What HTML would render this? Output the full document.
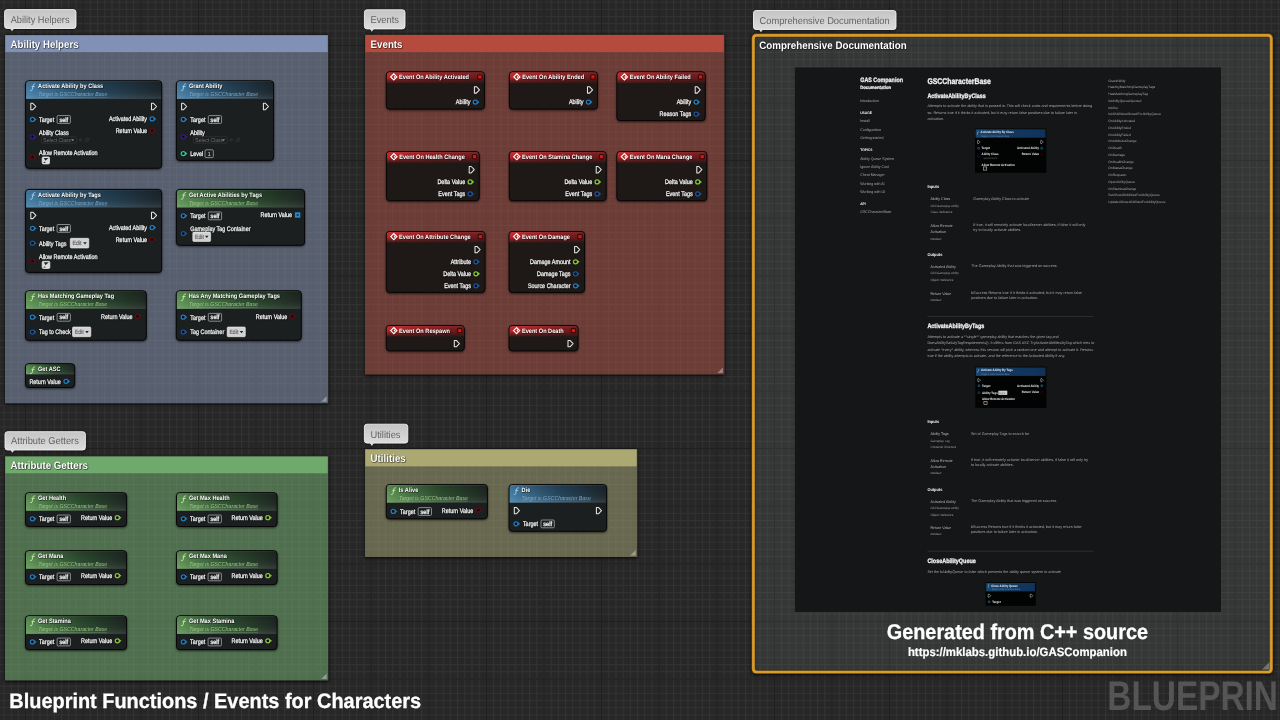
<!DOCTYPE html><html><head><meta charset="utf-8"><title>Blueprint Functions / Events for Characters</title>
<style>html,body{margin:0;padding:0;background:#272727;overflow:hidden}svg{display:block;will-change:transform;filter:blur(0.4px);text-rendering:geometricPrecision;font-family:"Liberation Sans",sans-serif}</style></head><body>
<svg width="1280" height="720" viewBox="0 0 1280 720">
<defs>
<pattern id="gf" x="25.10" y="44.90" width="7.2000" height="7.2000" patternUnits="userSpaceOnUse"><path d="M0.5 0V7.200M0 0.5H7.200" stroke="#333333" stroke-width="1"/></pattern>
<pattern id="gm" x="25.10" y="44.90" width="57.600" height="57.600" patternUnits="userSpaceOnUse"><path d="M0.5 0V57.600M0 0.5H57.600" stroke="#1e1e1e" stroke-width="1.1"/></pattern>
<filter color-interpolation-filters="sRGB" id="ts" x="-5%" y="-30%" width="110%" height="170%"><feDropShadow dx="0.5" dy="0.5" stdDeviation="0.25" flood-color="#000" flood-opacity="0.9"/></filter>
<filter color-interpolation-filters="sRGB" id="ns" x="-10%" y="-10%" width="120%" height="130%"><feDropShadow dx="0" dy="1" stdDeviation="1.2" flood-color="#000" flood-opacity="0.6"/></filter>
<filter color-interpolation-filters="sRGB" id="cs" x="-5%" y="-5%" width="110%" height="110%"><feDropShadow dx="0" dy="1" stdDeviation="1.5" flood-color="#000" flood-opacity="0.55"/></filter>
<filter color-interpolation-filters="sRGB" id="bs" x="-10%" y="-20%" width="120%" height="150%"><feDropShadow dx="0" dy="0.5" stdDeviation="0.8" flood-color="#000" flood-opacity="0.7"/></filter>
<filter color-interpolation-filters="sRGB" id="sb" x="-5%" y="-5%" width="110%" height="110%"><feGaussianBlur stdDeviation="1.6"/></filter>
<filter color-interpolation-filters="sRGB" id="blur"><feGaussianBlur stdDeviation="0.35"/></filter>
<linearGradient id="hblue" x1="0" x2="1" y1="0" y2="0"><stop offset="0" stop-color="#4d8ab6" stop-opacity="0.95"/><stop offset="0.55" stop-color="#2c5c7e" stop-opacity="0.62"/><stop offset="1" stop-color="#2c5c7e" stop-opacity="0.14"/></linearGradient>
<linearGradient id="hgreen" x1="0" x2="1" y1="0" y2="0"><stop offset="0" stop-color="#6aa35f" stop-opacity="0.95"/><stop offset="0.55" stop-color="#38693a" stop-opacity="0.62"/><stop offset="1" stop-color="#38693a" stop-opacity="0.14"/></linearGradient>
<linearGradient id="hred" x1="0" x2="1" y1="0" y2="0"><stop offset="0" stop-color="#c8262a" stop-opacity="0.95"/><stop offset="0.55" stop-color="#a01a1e" stop-opacity="0.85"/><stop offset="1" stop-color="#a01a1e" stop-opacity="0.6"/></linearGradient>
<linearGradient id="hv" x1="0" x2="0" y1="0" y2="1"><stop offset="0" stop-color="#fff" stop-opacity="0.16"/><stop offset="0.08" stop-color="#000" stop-opacity="0.16"/><stop offset="0.5" stop-color="#000" stop-opacity="0.04"/><stop offset="1" stop-color="#fff" stop-opacity="0.10"/></linearGradient>
<linearGradient id="hvr" x1="0" x2="0" y1="0" y2="1"><stop offset="0" stop-color="#fff" stop-opacity="0.10"/><stop offset="0.5" stop-color="#1e1917" stop-opacity="0"/><stop offset="1" stop-color="#1e1917" stop-opacity="0.8"/></linearGradient>
<linearGradient id="bub" x1="0" x2="0" y1="0" y2="1"><stop offset="0" stop-color="#c4c4c4"/><stop offset="1" stop-color="#dcdcdc"/></linearGradient>
</defs>
<rect width="1280" height="720" fill="#272727"/>
<rect width="1280" height="720" fill="url(#gf)"/>
<rect width="1280" height="720" fill="url(#gm)"/>
<clipPath id="s1"><path clip-rule="evenodd" d="M0 0H1280V720H0Z M5.00 35.00V403.30H328.20V35.00Z"/></clipPath>
<g clip-path="url(#s1)"><rect x="4.50" y="35.00" width="324.20" height="369.80" rx="0" fill="#000" opacity="0.75" filter="url(#sb)"/></g>
<rect x="5.00" y="35.00" width="323.20" height="368.30" fill="#8a98b6" opacity="0.5"/>
<rect x="5.30" y="35.30" width="322.40" height="16.70" fill="#8091b5"/>
<text x="10.60" y="48.10" font-size="10.8" fill="#fff" font-weight="700" textLength="68.00" lengthAdjust="spacingAndGlyphs" filter="url(#ts)">Ability Helpers</text>
<path d="M326.70 396.30V401.80H321.20Z" fill="#fff" opacity="0.35"/>
<g filter="url(#bs)"><rect x="4.60" y="9.60" width="71.40" height="18.90" rx="2.6" fill="url(#bub)" stroke="#f2f2f2" stroke-width="0.9"/>
<path d="M9.80 28.20L12.00 31.30L14.40 28.20Z" fill="#dcdcdc"/></g>
<text x="10.70" y="22.90" font-size="9.9" fill="#646464" textLength="58.80" lengthAdjust="spacingAndGlyphs">Ability Helpers</text>
<clipPath id="s2"><path clip-rule="evenodd" d="M0 0H1280V720H0Z M365.00 34.70V374.50H724.40V34.70Z"/></clipPath>
<g clip-path="url(#s2)"><rect x="364.50" y="34.70" width="360.40" height="341.30" rx="0" fill="#000" opacity="0.75" filter="url(#sb)"/></g>
<rect x="365.00" y="34.70" width="359.40" height="339.80" fill="#b25146" opacity="0.5"/>
<rect x="365.30" y="35.00" width="358.60" height="17.00" fill="#b64a3d"/>
<text x="370.60" y="47.80" font-size="10.8" fill="#fff" font-weight="700" textLength="31.88" lengthAdjust="spacingAndGlyphs" filter="url(#ts)">Events</text>
<path d="M722.90 367.50V373.00H717.40Z" fill="#fff" opacity="0.35"/>
<g filter="url(#bs)"><rect x="364.40" y="9.80" width="40.60" height="19.10" rx="2.6" fill="url(#bub)" stroke="#f2f2f2" stroke-width="0.9"/>
<path d="M369.60 28.60L371.80 31.70L374.20 28.60Z" fill="#dcdcdc"/></g>
<text x="370.50" y="23.30" font-size="9.9" fill="#646464" textLength="28.43" lengthAdjust="spacingAndGlyphs">Events</text>
<clipPath id="s3"><path clip-rule="evenodd" d="M0 0H1280V720H0Z M365.00 449.10V556.90H637.20V449.10Z"/></clipPath>
<g clip-path="url(#s3)"><rect x="364.50" y="449.10" width="273.20" height="109.30" rx="0" fill="#000" opacity="0.75" filter="url(#sb)"/></g>
<rect x="365.00" y="449.10" width="272.20" height="107.80" fill="#aaa878" opacity="0.5"/>
<rect x="365.30" y="449.40" width="271.40" height="17.00" fill="#aba872"/>
<text x="370.60" y="462.20" font-size="10.8" fill="#fff" font-weight="700" textLength="35.11" lengthAdjust="spacingAndGlyphs" filter="url(#ts)">Utilities</text>
<path d="M635.70 549.90V555.40H630.20Z" fill="#fff" opacity="0.35"/>
<g filter="url(#bs)"><rect x="364.40" y="424.20" width="43.40" height="18.90" rx="2.6" fill="url(#bub)" stroke="#f2f2f2" stroke-width="0.9"/>
<path d="M369.60 442.80L371.80 445.90L374.20 442.80Z" fill="#dcdcdc"/></g>
<text x="370.50" y="437.50" font-size="9.9" fill="#646464" textLength="29.97" lengthAdjust="spacingAndGlyphs">Utilities</text>
<clipPath id="s4"><path clip-rule="evenodd" d="M0 0H1280V720H0Z M5.00 456.30V680.40H328.20V456.30Z"/></clipPath>
<g clip-path="url(#s4)"><rect x="4.50" y="456.30" width="324.20" height="225.60" rx="0" fill="#000" opacity="0.75" filter="url(#sb)"/></g>
<rect x="5.00" y="456.30" width="323.20" height="224.10" fill="#7ab878" opacity="0.5"/>
<rect x="5.30" y="456.60" width="322.40" height="16.70" fill="#70a96c"/>
<text x="10.60" y="469.40" font-size="10.8" fill="#fff" font-weight="700" textLength="77.23" lengthAdjust="spacingAndGlyphs" filter="url(#ts)">Attribute Getters</text>
<path d="M326.70 673.40V678.90H321.20Z" fill="#fff" opacity="0.35"/>
<g filter="url(#bs)"><rect x="5.00" y="431.70" width="80.40" height="18.30" rx="2.6" fill="url(#bub)" stroke="#f2f2f2" stroke-width="0.9"/>
<path d="M10.20 449.70L12.40 452.80L14.80 449.70Z" fill="#dcdcdc"/></g>
<text x="11.10" y="444.40" font-size="9.9" fill="#646464" textLength="67.71" lengthAdjust="spacingAndGlyphs">Attribute Getters</text>
<g filter="url(#ns)"><rect x="25.60" y="80.80" width="136.10" height="87.50" rx="3.2" fill="#1b1f20" stroke="#060707" stroke-width="1"/></g>
<clipPath id="c1"><rect x="26.10" y="81.30" width="135.10" height="86.50" rx="2.8"/></clipPath>
<g clip-path="url(#c1)">
<rect x="25.60" y="80.80" width="136.10" height="18.10" fill="url(#hblue)"/>
<rect x="25.60" y="80.80" width="136.10" height="18.10" fill="url(#hv)"/>
</g>
<path d="M30.60 90.70c1.0 0.4 1.5 -0.3 1.75 -1.5l0.7 -3.6c0.25 -1.3 0.8 -1.9 1.9 -1.6M32.00 86.50h2.3" fill="none" stroke="#9fd0f5" stroke-width="0.95" stroke-linecap="round"/>
<text x="38.10" y="88.40" font-size="6.3" fill="#ffffff" font-weight="700" textLength="65.07" lengthAdjust="spacingAndGlyphs" filter="url(#ts)">Activate Ability by Class</text>
<text x="38.30" y="96.20" font-size="5.8" fill="#7fb0d2" font-style="italic" textLength="68.99" lengthAdjust="spacingAndGlyphs" opacity="0.9">Target is GSCCharacter Base</text>
<path d="M38.30 97.30h68.99" stroke="#7fb0d2" stroke-width="0.45" opacity="0.6"/>
<path d="M30.80 103.30 H32.80 L35.90 106.50 L32.80 109.70 H30.80Z" fill="none" stroke="#e4e4e4" stroke-width="1.05" stroke-linejoin="round"/>
<path d="M151.50 103.30 H153.50 L156.60 106.50 L153.50 109.70 H151.50Z" fill="none" stroke="#e4e4e4" stroke-width="1.05" stroke-linejoin="round"/>
<path d="M34.10 117.50 L36.70 119.40 L34.10 121.30Z" fill="#237cc0"/>
<circle cx="32.50" cy="119.40" r="2.0" fill="#0a0c0e" stroke="#237cc0" stroke-width="1.25"/>
<text x="39.00" y="121.75" font-size="6.6" fill="#f4f4f4" textLength="15.15" lengthAdjust="spacingAndGlyphs" filter="url(#ts)" stroke="#f4f4f4" stroke-width="0.28">Target</text>
<rect x="57.10" y="115.60" width="13.30" height="7.80" fill="none" rx="1" stroke="#b8b8b8" stroke-width="0.7"/>
<text x="63.75" y="121.60" font-size="6.2" fill="#ececec" text-anchor="middle" textLength="8.71" lengthAdjust="spacingAndGlyphs" stroke="#ececec" stroke-width="0.32">self</text>
<text x="147.10" y="121.25" font-size="6.6" fill="#f4f4f4" text-anchor="end" textLength="38.17" lengthAdjust="spacingAndGlyphs" filter="url(#ts)" stroke="#f4f4f4" stroke-width="0.28">Activated Ability</text>
<path d="M153.70 117.00 L156.30 118.90 L153.70 120.80Z" fill="#237cc0"/>
<circle cx="152.10" cy="118.90" r="2.0" fill="#0a0c0e" stroke="#237cc0" stroke-width="1.25"/>
<text x="147.10" y="132.95" font-size="6.6" fill="#f4f4f4" text-anchor="end" textLength="31.41" lengthAdjust="spacingAndGlyphs" filter="url(#ts)" stroke="#f4f4f4" stroke-width="0.28">Return Value</text>
<path d="M153.70 128.70 L156.30 130.60 L153.70 132.50Z" fill="#5f0c10"/>
<circle cx="152.10" cy="130.60" r="2.0" fill="#0a0c0e" stroke="#5f0c10" stroke-width="1.25"/>
<text x="39.00" y="134.95" font-size="6.6" fill="#f4f4f4" textLength="29.68" lengthAdjust="spacingAndGlyphs" filter="url(#ts)" stroke="#f4f4f4" stroke-width="0.28">Ability Class</text>
<path d="M34.10 134.90 L36.70 136.80 L34.10 138.70Z" fill="#391b84"/>
<circle cx="32.50" cy="136.80" r="2.0" fill="#0a0c0e" stroke="#391b84" stroke-width="1.25"/>
<rect x="41.50" y="136.80" width="34.80" height="6.30" fill="#1a1c1d" rx="1" stroke="#3a3d3f" stroke-width="0.6"/>
<text x="43.30" y="141.85" font-size="5.6" fill="#6f7375" textLength="27.79" lengthAdjust="spacingAndGlyphs">Select Class</text>
<path d="M70.90 139.15h3.4l-1.7 2z" fill="#8a8d8f"/>
<path d="M79.30 139.95h3.4M79.30 139.95l1.5 -1.4M79.30 139.95l1.5 1.4" stroke="#3c4042" stroke-width="0.7" fill="none"/>
<circle cx="87.50" cy="139.55" r="1.5" fill="none" stroke="#3c4042" stroke-width="0.7"/><path d="M86.40 140.75l-1.2 1.4" stroke="#3c4042" stroke-width="0.7"/>
<text x="39.00" y="155.15" font-size="6.6" fill="#f4f4f4" textLength="58.46" lengthAdjust="spacingAndGlyphs" filter="url(#ts)" stroke="#f4f4f4" stroke-width="0.28">Allow Remote Activation</text>
<path d="M34.10 155.30 L36.70 157.20 L34.10 159.10Z" fill="#5f0c10"/>
<circle cx="32.50" cy="157.20" r="2.0" fill="#0a0c0e" stroke="#5f0c10" stroke-width="1.25"/>
<rect x="42.20" y="157.00" width="7.30" height="6.90" fill="#dcdcdc" rx="1.1" stroke="#e6e6e6" stroke-width="0.8"/>
<path d="M43.90 158.00L45.30 160.86L48.50 158.00Z" fill="#242628"/>
<path d="M43.10 163.00l1.52 -1.38l1.10 1.38Z" fill="#3a3c3e"/>
<g filter="url(#ns)"><rect x="176.40" y="80.80" width="97.20" height="79.60" rx="3.2" fill="#1b1f20" stroke="#060707" stroke-width="1"/></g>
<clipPath id="c2"><rect x="176.90" y="81.30" width="96.20" height="78.60" rx="2.8"/></clipPath>
<g clip-path="url(#c2)">
<rect x="176.40" y="80.80" width="97.20" height="18.10" fill="url(#hblue)"/>
<rect x="176.40" y="80.80" width="97.20" height="18.10" fill="url(#hv)"/>
</g>
<path d="M181.40 90.70c1.0 0.4 1.5 -0.3 1.75 -1.5l0.7 -3.6c0.25 -1.3 0.8 -1.9 1.9 -1.6M182.80 86.50h2.3" fill="none" stroke="#9fd0f5" stroke-width="0.95" stroke-linecap="round"/>
<text x="188.90" y="88.40" font-size="6.3" fill="#ffffff" font-weight="700" textLength="33.51" lengthAdjust="spacingAndGlyphs" filter="url(#ts)">Grant Ability</text>
<text x="189.10" y="96.20" font-size="5.8" fill="#7fb0d2" font-style="italic" textLength="68.99" lengthAdjust="spacingAndGlyphs" opacity="0.9">Target is GSCCharacter Base</text>
<path d="M189.10 97.30h68.99" stroke="#7fb0d2" stroke-width="0.45" opacity="0.6"/>
<path d="M181.60 103.30 H183.60 L186.70 106.50 L183.60 109.70 H181.60Z" fill="none" stroke="#e4e4e4" stroke-width="1.05" stroke-linejoin="round"/>
<path d="M263.40 103.30 H265.40 L268.50 106.50 L265.40 109.70 H263.40Z" fill="none" stroke="#e4e4e4" stroke-width="1.05" stroke-linejoin="round"/>
<path d="M184.90 117.50 L187.50 119.40 L184.90 121.30Z" fill="#237cc0"/>
<circle cx="183.30" cy="119.40" r="2.0" fill="#0a0c0e" stroke="#237cc0" stroke-width="1.25"/>
<text x="190.30" y="121.75" font-size="6.6" fill="#f4f4f4" textLength="15.15" lengthAdjust="spacingAndGlyphs" filter="url(#ts)" stroke="#f4f4f4" stroke-width="0.28">Target</text>
<rect x="208.30" y="115.60" width="13.30" height="7.80" fill="none" rx="1" stroke="#b8b8b8" stroke-width="0.7"/>
<text x="214.95" y="121.60" font-size="6.2" fill="#ececec" text-anchor="middle" textLength="8.71" lengthAdjust="spacingAndGlyphs" stroke="#ececec" stroke-width="0.32">self</text>
<text x="190.30" y="134.95" font-size="6.6" fill="#f4f4f4" textLength="14.54" lengthAdjust="spacingAndGlyphs" filter="url(#ts)" stroke="#f4f4f4" stroke-width="0.28">Ability</text>
<path d="M184.90 134.90 L187.50 136.80 L184.90 138.70Z" fill="#391b84"/>
<circle cx="183.30" cy="136.80" r="2.0" fill="#0a0c0e" stroke="#391b84" stroke-width="1.25"/>
<rect x="193.50" y="136.80" width="33.70" height="6.30" fill="#1a1c1d" rx="1" stroke="#3a3d3f" stroke-width="0.6"/>
<text x="195.30" y="141.85" font-size="5.6" fill="#6f7375" textLength="27.79" lengthAdjust="spacingAndGlyphs">Select Class</text>
<path d="M221.80 139.15h3.4l-1.7 2z" fill="#8a8d8f"/>
<path d="M230.20 139.95h3.4M230.20 139.95l1.5 -1.4M230.20 139.95l1.5 1.4" stroke="#3c4042" stroke-width="0.7" fill="none"/>
<circle cx="238.40" cy="139.55" r="1.5" fill="none" stroke="#3c4042" stroke-width="0.7"/><path d="M237.30 140.75l-1.2 1.4" stroke="#3c4042" stroke-width="0.7"/>
<path d="M184.90 151.70 L187.50 153.60 L184.90 155.50Z" fill="#2cc896"/>
<circle cx="183.30" cy="153.60" r="2.0" fill="#0a0c0e" stroke="#2cc896" stroke-width="1.25"/>
<text x="190.30" y="155.95" font-size="6.6" fill="#f4f4f4" textLength="13.03" lengthAdjust="spacingAndGlyphs" filter="url(#ts)" stroke="#f4f4f4" stroke-width="0.28">Level</text>
<rect x="205.00" y="149.80" width="8.30" height="7.80" fill="none" rx="1" stroke="#b8b8b8" stroke-width="0.7"/>
<text x="209.15" y="155.70" font-size="5.8" fill="#e0e0e0" text-anchor="middle" textLength="2.89" lengthAdjust="spacingAndGlyphs">1</text>
<g filter="url(#ns)"><rect x="25.60" y="189.40" width="136.10" height="83.00" rx="3.2" fill="#1b1f20" stroke="#060707" stroke-width="1"/></g>
<clipPath id="c3"><rect x="26.10" y="189.90" width="135.10" height="82.00" rx="2.8"/></clipPath>
<g clip-path="url(#c3)">
<rect x="25.60" y="189.40" width="136.10" height="18.10" fill="url(#hblue)"/>
<rect x="25.60" y="189.40" width="136.10" height="18.10" fill="url(#hv)"/>
</g>
<path d="M30.60 199.30c1.0 0.4 1.5 -0.3 1.75 -1.5l0.7 -3.6c0.25 -1.3 0.8 -1.9 1.9 -1.6M32.00 195.10h2.3" fill="none" stroke="#9fd0f5" stroke-width="0.95" stroke-linecap="round"/>
<text x="38.10" y="197.00" font-size="6.3" fill="#ffffff" font-weight="700" textLength="62.77" lengthAdjust="spacingAndGlyphs" filter="url(#ts)">Activate Ability by Tags</text>
<text x="38.30" y="204.80" font-size="5.8" fill="#7fb0d2" font-style="italic" textLength="68.99" lengthAdjust="spacingAndGlyphs" opacity="0.9">Target is GSCCharacter Base</text>
<path d="M38.30 205.90h68.99" stroke="#7fb0d2" stroke-width="0.45" opacity="0.6"/>
<path d="M30.80 212.20 H32.80 L35.90 215.40 L32.80 218.60 H30.80Z" fill="none" stroke="#e4e4e4" stroke-width="1.05" stroke-linejoin="round"/>
<path d="M151.50 212.20 H153.50 L156.60 215.40 L153.50 218.60 H151.50Z" fill="none" stroke="#e4e4e4" stroke-width="1.05" stroke-linejoin="round"/>
<path d="M34.10 226.40 L36.70 228.30 L34.10 230.20Z" fill="#237cc0"/>
<circle cx="32.50" cy="228.30" r="2.0" fill="#0a0c0e" stroke="#237cc0" stroke-width="1.25"/>
<text x="39.00" y="230.65" font-size="6.6" fill="#f4f4f4" textLength="15.15" lengthAdjust="spacingAndGlyphs" filter="url(#ts)" stroke="#f4f4f4" stroke-width="0.28">Target</text>
<rect x="57.10" y="224.50" width="13.30" height="7.80" fill="none" rx="1" stroke="#b8b8b8" stroke-width="0.7"/>
<text x="63.75" y="230.50" font-size="6.2" fill="#ececec" text-anchor="middle" textLength="8.71" lengthAdjust="spacingAndGlyphs" stroke="#ececec" stroke-width="0.32">self</text>
<text x="147.10" y="229.95" font-size="6.6" fill="#f4f4f4" text-anchor="end" textLength="38.17" lengthAdjust="spacingAndGlyphs" filter="url(#ts)" stroke="#f4f4f4" stroke-width="0.28">Activated Ability</text>
<path d="M153.70 225.70 L156.30 227.60 L153.70 229.50Z" fill="#237cc0"/>
<circle cx="152.10" cy="227.60" r="2.0" fill="#0a0c0e" stroke="#237cc0" stroke-width="1.25"/>
<text x="147.10" y="242.05" font-size="6.6" fill="#f4f4f4" text-anchor="end" textLength="31.41" lengthAdjust="spacingAndGlyphs" filter="url(#ts)" stroke="#f4f4f4" stroke-width="0.28">Return Value</text>
<path d="M153.70 237.80 L156.30 239.70 L153.70 241.60Z" fill="#5f0c10"/>
<circle cx="152.10" cy="239.70" r="2.0" fill="#0a0c0e" stroke="#5f0c10" stroke-width="1.25"/>
<path d="M34.10 241.30 L36.70 243.20 L34.10 245.10Z" fill="#1b529c"/>
<circle cx="32.50" cy="243.20" r="2.0" fill="#0a0c0e" stroke="#1b529c" stroke-width="1.25"/>
<text x="39.00" y="245.55" font-size="6.6" fill="#f4f4f4" textLength="27.47" lengthAdjust="spacingAndGlyphs" filter="url(#ts)" stroke="#f4f4f4" stroke-width="0.28">Ability Tags</text>
<rect x="70.30" y="238.30" width="18.50" height="9.70" fill="#d2d2d2" rx="1" stroke="#f4f4f4" stroke-width="0.6"/>
<text x="72.50" y="245.25" font-size="6.2" fill="#6a6a6a" textLength="8.96" lengthAdjust="spacingAndGlyphs" stroke="#6a6a6a" stroke-width="0.2">Edit</text>
<path d="M83.20 242.25h3.6l-1.8 2.2z" fill="#222"/>
<text x="39.00" y="259.15" font-size="6.6" fill="#f4f4f4" textLength="58.46" lengthAdjust="spacingAndGlyphs" filter="url(#ts)" stroke="#f4f4f4" stroke-width="0.28">Allow Remote Activation</text>
<path d="M34.10 259.40 L36.70 261.30 L34.10 263.20Z" fill="#5f0c10"/>
<circle cx="32.50" cy="261.30" r="2.0" fill="#0a0c0e" stroke="#5f0c10" stroke-width="1.25"/>
<rect x="42.20" y="261.30" width="7.60" height="7.20" fill="#dcdcdc" rx="1.1" stroke="#e6e6e6" stroke-width="0.8"/>
<path d="M43.90 262.30L45.44 265.33L48.80 262.30Z" fill="#242628"/>
<path d="M43.10 267.60l1.58 -1.44l1.15 1.44Z" fill="#3a3c3e"/>
<g filter="url(#ns)"><rect x="176.40" y="189.40" width="128.20" height="55.90" rx="3.2" fill="#1b1f20" stroke="#060707" stroke-width="1"/></g>
<clipPath id="c4"><rect x="176.90" y="189.90" width="127.20" height="54.90" rx="2.8"/></clipPath>
<g clip-path="url(#c4)">
<rect x="176.40" y="189.40" width="128.20" height="18.10" fill="url(#hgreen)"/>
<rect x="176.40" y="189.40" width="128.20" height="18.10" fill="url(#hv)"/>
</g>
<path d="M181.40 199.30c1.0 0.4 1.5 -0.3 1.75 -1.5l0.7 -3.6c0.25 -1.3 0.8 -1.9 1.9 -1.6M182.80 195.10h2.3" fill="none" stroke="#bfe8a8" stroke-width="0.95" stroke-linecap="round"/>
<text x="188.90" y="197.00" font-size="6.3" fill="#ffffff" font-weight="700" textLength="73.18" lengthAdjust="spacingAndGlyphs" filter="url(#ts)">Get Active Abilities by Tags</text>
<text x="189.10" y="204.80" font-size="5.8" fill="#9fce8c" font-style="italic" textLength="68.99" lengthAdjust="spacingAndGlyphs" opacity="0.9">Target is GSCCharacter Base</text>
<path d="M189.10 205.90h68.99" stroke="#9fce8c" stroke-width="0.45" opacity="0.6"/>
<path d="M184.90 213.90 L187.50 215.80 L184.90 217.70Z" fill="#237cc0"/>
<circle cx="183.30" cy="215.80" r="2.0" fill="#0a0c0e" stroke="#237cc0" stroke-width="1.25"/>
<text x="190.30" y="218.15" font-size="6.6" fill="#f4f4f4" textLength="15.15" lengthAdjust="spacingAndGlyphs" filter="url(#ts)" stroke="#f4f4f4" stroke-width="0.28">Target</text>
<rect x="208.30" y="212.00" width="13.30" height="7.80" fill="none" rx="1" stroke="#b8b8b8" stroke-width="0.7"/>
<text x="214.95" y="218.00" font-size="6.2" fill="#ececec" text-anchor="middle" textLength="8.71" lengthAdjust="spacingAndGlyphs" stroke="#ececec" stroke-width="0.32">self</text>
<text x="292.00" y="217.35" font-size="6.6" fill="#f4f4f4" text-anchor="end" textLength="31.41" lengthAdjust="spacingAndGlyphs" filter="url(#ts)" stroke="#f4f4f4" stroke-width="0.28">Return Value</text>
<rect x="294.90" y="212.30" width="5.40" height="5.40" fill="#2a8fd6" opacity="0.95"/>
<rect x="296.60" y="214.00" width="2.00" height="2.00" fill="#0e3a5e" opacity="0.9"/>
<text x="190.30" y="230.65" font-size="6.6" fill="#f4f4f4" textLength="60.19" lengthAdjust="spacingAndGlyphs" filter="url(#ts)" stroke="#f4f4f4" stroke-width="0.28">Gameplay Tag Container</text>
<path d="M184.90 231.60 L187.50 233.50 L184.90 235.40Z" fill="#1b529c"/>
<circle cx="183.30" cy="233.50" r="2.0" fill="#0a0c0e" stroke="#1b529c" stroke-width="1.25"/>
<rect x="192.80" y="232.10" width="17.80" height="9.30" fill="#d2d2d2" rx="1" stroke="#f4f4f4" stroke-width="0.6"/>
<text x="195.00" y="238.85" font-size="6.2" fill="#6a6a6a" textLength="8.96" lengthAdjust="spacingAndGlyphs" stroke="#6a6a6a" stroke-width="0.2">Edit</text>
<path d="M205.00 235.85h3.6l-1.8 2.2z" fill="#222"/>
<g filter="url(#ns)"><rect x="25.50" y="290.80" width="120.80" height="49.50" rx="3.2" fill="#1b1f20" stroke="#060707" stroke-width="1"/></g>
<clipPath id="c5"><rect x="26.00" y="291.30" width="119.80" height="48.50" rx="2.8"/></clipPath>
<g clip-path="url(#c5)">
<rect x="25.50" y="290.80" width="120.80" height="18.10" fill="url(#hgreen)"/>
<rect x="25.50" y="290.80" width="120.80" height="18.10" fill="url(#hv)"/>
</g>
<path d="M30.50 300.70c1.0 0.4 1.5 -0.3 1.75 -1.5l0.7 -3.6c0.25 -1.3 0.8 -1.9 1.9 -1.6M31.90 296.50h2.3" fill="none" stroke="#bfe8a8" stroke-width="0.95" stroke-linecap="round"/>
<text x="38.00" y="298.40" font-size="6.3" fill="#ffffff" font-weight="700" textLength="76.10" lengthAdjust="spacingAndGlyphs" filter="url(#ts)">Has Matching Gameplay Tag</text>
<text x="38.20" y="306.20" font-size="5.8" fill="#9fce8c" font-style="italic" textLength="68.99" lengthAdjust="spacingAndGlyphs" opacity="0.9">Target is GSCCharacter Base</text>
<path d="M38.20 307.30h68.99" stroke="#9fce8c" stroke-width="0.45" opacity="0.6"/>
<path d="M34.00 315.30 L36.60 317.20 L34.00 319.10Z" fill="#237cc0"/>
<circle cx="32.40" cy="317.20" r="2.0" fill="#0a0c0e" stroke="#237cc0" stroke-width="1.25"/>
<text x="39.00" y="319.55" font-size="6.6" fill="#f4f4f4" textLength="15.15" lengthAdjust="spacingAndGlyphs" filter="url(#ts)" stroke="#f4f4f4" stroke-width="0.28">Target</text>
<rect x="57.10" y="313.40" width="13.30" height="7.80" fill="none" rx="1" stroke="#b8b8b8" stroke-width="0.7"/>
<text x="63.75" y="319.40" font-size="6.2" fill="#ececec" text-anchor="middle" textLength="8.71" lengthAdjust="spacingAndGlyphs" stroke="#ececec" stroke-width="0.32">self</text>
<text x="132.50" y="318.65" font-size="6.6" fill="#f4f4f4" text-anchor="end" textLength="31.41" lengthAdjust="spacingAndGlyphs" filter="url(#ts)" stroke="#f4f4f4" stroke-width="0.28">Return Value</text>
<path d="M139.10 314.40 L141.70 316.30 L139.10 318.20Z" fill="#5f0c10"/>
<circle cx="137.50" cy="316.30" r="2.0" fill="#0a0c0e" stroke="#5f0c10" stroke-width="1.25"/>
<path d="M34.00 330.10 L36.60 332.00 L34.00 333.90Z" fill="#1b529c"/>
<circle cx="32.40" cy="332.00" r="2.0" fill="#0a0c0e" stroke="#1b529c" stroke-width="1.25"/>
<text x="39.00" y="334.35" font-size="6.6" fill="#f4f4f4" textLength="31.81" lengthAdjust="spacingAndGlyphs" filter="url(#ts)" stroke="#f4f4f4" stroke-width="0.28">Tag to Check</text>
<rect x="72.50" y="327.00" width="18.30" height="9.70" fill="#d2d2d2" rx="1" stroke="#f4f4f4" stroke-width="0.6"/>
<text x="74.70" y="333.95" font-size="6.2" fill="#6a6a6a" textLength="8.96" lengthAdjust="spacingAndGlyphs" stroke="#6a6a6a" stroke-width="0.2">Edit</text>
<path d="M85.20 330.95h3.6l-1.8 2.2z" fill="#222"/>
<g filter="url(#ns)"><rect x="176.30" y="290.80" width="125.00" height="49.50" rx="3.2" fill="#1b1f20" stroke="#060707" stroke-width="1"/></g>
<clipPath id="c6"><rect x="176.80" y="291.30" width="124.00" height="48.50" rx="2.8"/></clipPath>
<g clip-path="url(#c6)">
<rect x="176.30" y="290.80" width="125.00" height="18.10" fill="url(#hgreen)"/>
<rect x="176.30" y="290.80" width="125.00" height="18.10" fill="url(#hv)"/>
</g>
<path d="M181.30 300.70c1.0 0.4 1.5 -0.3 1.75 -1.5l0.7 -3.6c0.25 -1.3 0.8 -1.9 1.9 -1.6M182.70 296.50h2.3" fill="none" stroke="#bfe8a8" stroke-width="0.95" stroke-linecap="round"/>
<text x="188.80" y="298.40" font-size="6.3" fill="#ffffff" font-weight="700" textLength="91.20" lengthAdjust="spacingAndGlyphs" filter="url(#ts)">Has Any Matching Gameplay Tags</text>
<text x="189.00" y="306.20" font-size="5.8" fill="#9fce8c" font-style="italic" textLength="68.99" lengthAdjust="spacingAndGlyphs" opacity="0.9">Target is GSCCharacter Base</text>
<path d="M189.00 307.30h68.99" stroke="#9fce8c" stroke-width="0.45" opacity="0.6"/>
<path d="M184.80 315.30 L187.40 317.20 L184.80 319.10Z" fill="#237cc0"/>
<circle cx="183.20" cy="317.20" r="2.0" fill="#0a0c0e" stroke="#237cc0" stroke-width="1.25"/>
<text x="190.30" y="319.55" font-size="6.6" fill="#f4f4f4" textLength="15.15" lengthAdjust="spacingAndGlyphs" filter="url(#ts)" stroke="#f4f4f4" stroke-width="0.28">Target</text>
<rect x="208.30" y="313.40" width="13.30" height="7.80" fill="none" rx="1" stroke="#b8b8b8" stroke-width="0.7"/>
<text x="214.95" y="319.40" font-size="6.2" fill="#ececec" text-anchor="middle" textLength="8.71" lengthAdjust="spacingAndGlyphs" stroke="#ececec" stroke-width="0.32">self</text>
<text x="287.20" y="318.65" font-size="6.6" fill="#f4f4f4" text-anchor="end" textLength="31.41" lengthAdjust="spacingAndGlyphs" filter="url(#ts)" stroke="#f4f4f4" stroke-width="0.28">Return Value</text>
<path d="M293.80 314.40 L296.40 316.30 L293.80 318.20Z" fill="#5f0c10"/>
<circle cx="292.20" cy="316.30" r="2.0" fill="#0a0c0e" stroke="#5f0c10" stroke-width="1.25"/>
<path d="M184.80 330.10 L187.40 332.00 L184.80 333.90Z" fill="#1b529c"/>
<circle cx="183.20" cy="332.00" r="2.0" fill="#0a0c0e" stroke="#1b529c" stroke-width="1.25"/>
<text x="190.30" y="334.35" font-size="6.6" fill="#f4f4f4" textLength="33.93" lengthAdjust="spacingAndGlyphs" filter="url(#ts)" stroke="#f4f4f4" stroke-width="0.28">Tag Container</text>
<rect x="227.20" y="327.00" width="18.10" height="9.70" fill="#d2d2d2" rx="1" stroke="#f4f4f4" stroke-width="0.6"/>
<text x="229.40" y="333.95" font-size="6.2" fill="#6a6a6a" textLength="8.96" lengthAdjust="spacingAndGlyphs" stroke="#6a6a6a" stroke-width="0.2">Edit</text>
<path d="M239.70 330.95h3.6l-1.8 2.2z" fill="#222"/>
<g filter="url(#ns)"><rect x="25.50" y="363.70" width="49.20" height="23.80" rx="3.2" fill="#1b1f20" stroke="#060707" stroke-width="1"/></g>
<clipPath id="c7"><rect x="26.00" y="364.20" width="48.20" height="22.80" rx="2.8"/></clipPath>
<g clip-path="url(#c7)">
<rect x="25.50" y="363.70" width="49.20" height="10.60" fill="url(#hgreen)"/>
<rect x="25.50" y="363.70" width="49.20" height="10.60" fill="url(#hv)"/>
</g>
<path d="M30.50 373.60c1.0 0.4 1.5 -0.3 1.75 -1.5l0.7 -3.6c0.25 -1.3 0.8 -1.9 1.9 -1.6M31.90 369.40h2.3" fill="none" stroke="#bfe8a8" stroke-width="0.95" stroke-linecap="round"/>
<text x="38.00" y="371.30" font-size="6.3" fill="#ffffff" font-weight="700" textLength="22.59" lengthAdjust="spacingAndGlyphs" filter="url(#ts)">Get ASC</text>
<text x="60.80" y="383.65" font-size="6.6" fill="#f4f4f4" text-anchor="end" textLength="31.41" lengthAdjust="spacingAndGlyphs" filter="url(#ts)" stroke="#f4f4f4" stroke-width="0.28">Return Value</text>
<path d="M67.60 379.40 L70.20 381.30 L67.60 383.20Z" fill="#237cc0"/>
<circle cx="66.00" cy="381.30" r="2.0" fill="#0a0c0e" stroke="#237cc0" stroke-width="1.25"/>
<g filter="url(#ns)"><rect x="386.30" y="71.80" width="98.10" height="37.30" rx="3.2" fill="#1e1917" stroke="#060707" stroke-width="1"/></g>
<clipPath id="c8"><rect x="386.80" y="72.30" width="97.10" height="36.30" rx="2.8"/></clipPath>
<g clip-path="url(#c8)">
<rect x="386.30" y="71.80" width="98.10" height="10.60" fill="url(#hred)"/>
<rect x="386.30" y="71.80" width="98.10" height="10.60" fill="url(#hvr)"/>
</g>
<path d="M390.70 76.90L393.80 73.80L396.90 76.90L393.80 80.00Z" fill="none" stroke="#fff" stroke-width="1.1"/>
<path d="M393.60 76.90L395.20 75.40V78.40Z" fill="#fff"/>
<text x="399.10" y="79.40" font-size="6.3" fill="#ffffff" font-weight="700" textLength="69.85" lengthAdjust="spacingAndGlyphs" filter="url(#ts)">Event On Ability Activated</text>
<rect x="477.60" y="74.70" width="4.40" height="4.40" fill="#d61616" rx="1.1" stroke="#3a0606" stroke-width="1.1"/>
<path d="M474.40 86.70 H476.40 L479.50 89.90 L476.40 93.10 H474.40Z" fill="none" stroke="#e4e4e4" stroke-width="1.05" stroke-linejoin="round"/>
<text x="470.40" y="104.45" font-size="6.6" fill="#f4f4f4" text-anchor="end" textLength="14.54" lengthAdjust="spacingAndGlyphs" filter="url(#ts)" stroke="#f4f4f4" stroke-width="0.28">Ability</text>
<path d="M476.90 100.20 L479.50 102.10 L476.90 104.00Z" fill="#237cc0"/>
<circle cx="475.30" cy="102.10" r="2.0" fill="#0a0c0e" stroke="#237cc0" stroke-width="1.25"/>
<g filter="url(#ns)"><rect x="509.40" y="71.80" width="88.10" height="37.30" rx="3.2" fill="#1e1917" stroke="#060707" stroke-width="1"/></g>
<clipPath id="c9"><rect x="509.90" y="72.30" width="87.10" height="36.30" rx="2.8"/></clipPath>
<g clip-path="url(#c9)">
<rect x="509.40" y="71.80" width="88.10" height="10.60" fill="url(#hred)"/>
<rect x="509.40" y="71.80" width="88.10" height="10.60" fill="url(#hvr)"/>
</g>
<path d="M513.80 76.90L516.90 73.80L520.00 76.90L516.90 80.00Z" fill="none" stroke="#fff" stroke-width="1.1"/>
<path d="M516.70 76.90L518.30 75.40V78.40Z" fill="#fff"/>
<text x="522.20" y="79.40" font-size="6.3" fill="#ffffff" font-weight="700" textLength="61.93" lengthAdjust="spacingAndGlyphs" filter="url(#ts)">Event On Ability Ended</text>
<rect x="590.70" y="74.70" width="4.40" height="4.40" fill="#d61616" rx="1.1" stroke="#3a0606" stroke-width="1.1"/>
<path d="M587.50 86.70 H589.50 L592.60 89.90 L589.50 93.10 H587.50Z" fill="none" stroke="#e4e4e4" stroke-width="1.05" stroke-linejoin="round"/>
<text x="583.50" y="104.45" font-size="6.6" fill="#f4f4f4" text-anchor="end" textLength="14.54" lengthAdjust="spacingAndGlyphs" filter="url(#ts)" stroke="#f4f4f4" stroke-width="0.28">Ability</text>
<path d="M590.00 100.20 L592.60 102.10 L590.00 104.00Z" fill="#237cc0"/>
<circle cx="588.40" cy="102.10" r="2.0" fill="#0a0c0e" stroke="#237cc0" stroke-width="1.25"/>
<g filter="url(#ns)"><rect x="616.90" y="71.80" width="88.30" height="48.80" rx="3.2" fill="#1e1917" stroke="#060707" stroke-width="1"/></g>
<clipPath id="c10"><rect x="617.40" y="72.30" width="87.30" height="47.80" rx="2.8"/></clipPath>
<g clip-path="url(#c10)">
<rect x="616.90" y="71.80" width="88.30" height="10.60" fill="url(#hred)"/>
<rect x="616.90" y="71.80" width="88.30" height="10.60" fill="url(#hvr)"/>
</g>
<path d="M621.30 76.90L624.40 73.80L627.50 76.90L624.40 80.00Z" fill="none" stroke="#fff" stroke-width="1.1"/>
<path d="M624.20 76.90L625.80 75.40V78.40Z" fill="#fff"/>
<text x="629.70" y="79.40" font-size="6.3" fill="#ffffff" font-weight="700" textLength="61.00" lengthAdjust="spacingAndGlyphs" filter="url(#ts)">Event On Ability Failed</text>
<rect x="698.40" y="74.70" width="4.40" height="4.40" fill="#d61616" rx="1.1" stroke="#3a0606" stroke-width="1.1"/>
<path d="M695.20 86.70 H697.20 L700.30 89.90 L697.20 93.10 H695.20Z" fill="none" stroke="#e4e4e4" stroke-width="1.05" stroke-linejoin="round"/>
<text x="691.20" y="104.45" font-size="6.6" fill="#f4f4f4" text-anchor="end" textLength="14.54" lengthAdjust="spacingAndGlyphs" filter="url(#ts)" stroke="#f4f4f4" stroke-width="0.28">Ability</text>
<path d="M697.70 100.20 L700.30 102.10 L697.70 104.00Z" fill="#237cc0"/>
<circle cx="696.10" cy="102.10" r="2.0" fill="#0a0c0e" stroke="#237cc0" stroke-width="1.25"/>
<text x="691.20" y="116.45" font-size="6.6" fill="#f4f4f4" text-anchor="end" textLength="31.71" lengthAdjust="spacingAndGlyphs" filter="url(#ts)" stroke="#f4f4f4" stroke-width="0.28">Reason Tags</text>
<path d="M697.70 112.20 L700.30 114.10 L697.70 116.00Z" fill="#1b529c"/>
<circle cx="696.10" cy="114.10" r="2.0" fill="#0a0c0e" stroke="#1b529c" stroke-width="1.25"/>
<g filter="url(#ns)"><rect x="386.40" y="151.60" width="92.80" height="49.10" rx="3.2" fill="#1e1917" stroke="#060707" stroke-width="1"/></g>
<clipPath id="c11"><rect x="386.90" y="152.10" width="91.80" height="48.10" rx="2.8"/></clipPath>
<g clip-path="url(#c11)">
<rect x="386.40" y="151.60" width="92.80" height="10.60" fill="url(#hred)"/>
<rect x="386.40" y="151.60" width="92.80" height="10.60" fill="url(#hvr)"/>
</g>
<path d="M390.80 156.70L393.90 153.60L397.00 156.70L393.90 159.80Z" fill="none" stroke="#fff" stroke-width="1.1"/>
<path d="M393.70 156.70L395.30 155.20V158.20Z" fill="#fff"/>
<text x="399.20" y="159.20" font-size="6.3" fill="#ffffff" font-weight="700" textLength="65.58" lengthAdjust="spacingAndGlyphs" filter="url(#ts)">Event On Health Change</text>
<rect x="472.40" y="154.50" width="4.40" height="4.40" fill="#d61616" rx="1.1" stroke="#3a0606" stroke-width="1.1"/>
<path d="M469.20 166.50 H471.20 L474.30 169.70 L471.20 172.90 H469.20Z" fill="none" stroke="#e4e4e4" stroke-width="1.05" stroke-linejoin="round"/>
<text x="465.20" y="184.25" font-size="6.6" fill="#f4f4f4" text-anchor="end" textLength="27.77" lengthAdjust="spacingAndGlyphs" filter="url(#ts)" stroke="#f4f4f4" stroke-width="0.28">Delta Value</text>
<path d="M471.70 180.00 L474.30 181.90 L471.70 183.80Z" fill="#86c936"/>
<circle cx="470.10" cy="181.90" r="2.0" fill="#0a0c0e" stroke="#86c936" stroke-width="1.25"/>
<text x="465.20" y="196.25" font-size="6.6" fill="#f4f4f4" text-anchor="end" textLength="26.86" lengthAdjust="spacingAndGlyphs" filter="url(#ts)" stroke="#f4f4f4" stroke-width="0.28">Event Tags</text>
<path d="M471.70 192.00 L474.30 193.90 L471.70 195.80Z" fill="#1b529c"/>
<circle cx="470.10" cy="193.90" r="2.0" fill="#0a0c0e" stroke="#1b529c" stroke-width="1.25"/>
<g filter="url(#ns)"><rect x="509.30" y="151.60" width="96.90" height="49.10" rx="3.2" fill="#1e1917" stroke="#060707" stroke-width="1"/></g>
<clipPath id="c12"><rect x="509.80" y="152.10" width="95.90" height="48.10" rx="2.8"/></clipPath>
<g clip-path="url(#c12)">
<rect x="509.30" y="151.60" width="96.90" height="10.60" fill="url(#hred)"/>
<rect x="509.30" y="151.60" width="96.90" height="10.60" fill="url(#hvr)"/>
</g>
<path d="M513.70 156.70L516.80 153.60L519.90 156.70L516.80 159.80Z" fill="none" stroke="#fff" stroke-width="1.1"/>
<path d="M516.60 156.70L518.20 155.20V158.20Z" fill="#fff"/>
<text x="522.10" y="159.20" font-size="6.3" fill="#ffffff" font-weight="700" textLength="70.27" lengthAdjust="spacingAndGlyphs" filter="url(#ts)">Event On Stamina Change</text>
<rect x="599.40" y="154.50" width="4.40" height="4.40" fill="#d61616" rx="1.1" stroke="#3a0606" stroke-width="1.1"/>
<path d="M596.20 166.50 H598.20 L601.30 169.70 L598.20 172.90 H596.20Z" fill="none" stroke="#e4e4e4" stroke-width="1.05" stroke-linejoin="round"/>
<text x="592.20" y="184.25" font-size="6.6" fill="#f4f4f4" text-anchor="end" textLength="27.77" lengthAdjust="spacingAndGlyphs" filter="url(#ts)" stroke="#f4f4f4" stroke-width="0.28">Delta Value</text>
<path d="M598.70 180.00 L601.30 181.90 L598.70 183.80Z" fill="#86c936"/>
<circle cx="597.10" cy="181.90" r="2.0" fill="#0a0c0e" stroke="#86c936" stroke-width="1.25"/>
<text x="592.20" y="196.25" font-size="6.6" fill="#f4f4f4" text-anchor="end" textLength="26.86" lengthAdjust="spacingAndGlyphs" filter="url(#ts)" stroke="#f4f4f4" stroke-width="0.28">Event Tags</text>
<path d="M598.70 192.00 L601.30 193.90 L598.70 195.80Z" fill="#1b529c"/>
<circle cx="597.10" cy="193.90" r="2.0" fill="#0a0c0e" stroke="#1b529c" stroke-width="1.25"/>
<g filter="url(#ns)"><rect x="616.90" y="151.60" width="89.90" height="49.10" rx="3.2" fill="#1e1917" stroke="#060707" stroke-width="1"/></g>
<clipPath id="c13"><rect x="617.40" y="152.10" width="88.90" height="48.10" rx="2.8"/></clipPath>
<g clip-path="url(#c13)">
<rect x="616.90" y="151.60" width="89.90" height="10.60" fill="url(#hred)"/>
<rect x="616.90" y="151.60" width="89.90" height="10.60" fill="url(#hvr)"/>
</g>
<path d="M621.30 156.70L624.40 153.60L627.50 156.70L624.40 159.80Z" fill="none" stroke="#fff" stroke-width="1.1"/>
<path d="M624.20 156.70L625.80 155.20V158.20Z" fill="#fff"/>
<text x="629.70" y="159.20" font-size="6.3" fill="#ffffff" font-weight="700" textLength="62.77" lengthAdjust="spacingAndGlyphs" filter="url(#ts)">Event On Mana Change</text>
<rect x="700.00" y="154.50" width="4.40" height="4.40" fill="#d61616" rx="1.1" stroke="#3a0606" stroke-width="1.1"/>
<path d="M696.80 166.50 H698.80 L701.90 169.70 L698.80 172.90 H696.80Z" fill="none" stroke="#e4e4e4" stroke-width="1.05" stroke-linejoin="round"/>
<text x="692.80" y="184.25" font-size="6.6" fill="#f4f4f4" text-anchor="end" textLength="27.77" lengthAdjust="spacingAndGlyphs" filter="url(#ts)" stroke="#f4f4f4" stroke-width="0.28">Delta Value</text>
<path d="M699.30 180.00 L701.90 181.90 L699.30 183.80Z" fill="#86c936"/>
<circle cx="697.70" cy="181.90" r="2.0" fill="#0a0c0e" stroke="#86c936" stroke-width="1.25"/>
<text x="692.80" y="196.25" font-size="6.6" fill="#f4f4f4" text-anchor="end" textLength="26.86" lengthAdjust="spacingAndGlyphs" filter="url(#ts)" stroke="#f4f4f4" stroke-width="0.28">Event Tags</text>
<path d="M699.30 192.00 L701.90 193.90 L699.30 195.80Z" fill="#1b529c"/>
<circle cx="697.70" cy="193.90" r="2.0" fill="#0a0c0e" stroke="#1b529c" stroke-width="1.25"/>
<g filter="url(#ns)"><rect x="386.30" y="231.50" width="98.70" height="60.90" rx="3.2" fill="#1e1917" stroke="#060707" stroke-width="1"/></g>
<clipPath id="c14"><rect x="386.80" y="232.00" width="97.70" height="59.90" rx="2.8"/></clipPath>
<g clip-path="url(#c14)">
<rect x="386.30" y="231.50" width="98.70" height="10.60" fill="url(#hred)"/>
<rect x="386.30" y="231.50" width="98.70" height="10.60" fill="url(#hvr)"/>
</g>
<path d="M390.70 236.60L393.80 233.50L396.90 236.60L393.80 239.70Z" fill="none" stroke="#fff" stroke-width="1.1"/>
<path d="M393.60 236.60L395.20 235.10V238.10Z" fill="#fff"/>
<text x="399.10" y="239.10" font-size="6.3" fill="#ffffff" font-weight="700" textLength="71.61" lengthAdjust="spacingAndGlyphs" filter="url(#ts)">Event On Attribute Change</text>
<rect x="478.20" y="234.40" width="4.40" height="4.40" fill="#d61616" rx="1.1" stroke="#3a0606" stroke-width="1.1"/>
<path d="M475.00 246.40 H477.00 L480.10 249.60 L477.00 252.80 H475.00Z" fill="none" stroke="#e4e4e4" stroke-width="1.05" stroke-linejoin="round"/>
<text x="471.00" y="264.15" font-size="6.6" fill="#f4f4f4" text-anchor="end" textLength="20.30" lengthAdjust="spacingAndGlyphs" filter="url(#ts)" stroke="#f4f4f4" stroke-width="0.28">Attribute</text>
<path d="M477.50 259.90 L480.10 261.80 L477.50 263.70Z" fill="#1b529c"/>
<circle cx="475.90" cy="261.80" r="2.0" fill="#0a0c0e" stroke="#1b529c" stroke-width="1.25"/>
<text x="471.00" y="276.15" font-size="6.6" fill="#f4f4f4" text-anchor="end" textLength="27.77" lengthAdjust="spacingAndGlyphs" filter="url(#ts)" stroke="#f4f4f4" stroke-width="0.28">Delta Value</text>
<path d="M477.50 271.90 L480.10 273.80 L477.50 275.70Z" fill="#86c936"/>
<circle cx="475.90" cy="273.80" r="2.0" fill="#0a0c0e" stroke="#86c936" stroke-width="1.25"/>
<text x="471.00" y="288.15" font-size="6.6" fill="#f4f4f4" text-anchor="end" textLength="26.86" lengthAdjust="spacingAndGlyphs" filter="url(#ts)" stroke="#f4f4f4" stroke-width="0.28">Event Tags</text>
<path d="M477.50 283.90 L480.10 285.80 L477.50 287.70Z" fill="#1b529c"/>
<circle cx="475.90" cy="285.80" r="2.0" fill="#0a0c0e" stroke="#1b529c" stroke-width="1.25"/>
<g filter="url(#ns)"><rect x="509.10" y="231.50" width="75.50" height="60.90" rx="3.2" fill="#1e1917" stroke="#060707" stroke-width="1"/></g>
<clipPath id="c15"><rect x="509.60" y="232.00" width="74.50" height="59.90" rx="2.8"/></clipPath>
<g clip-path="url(#c15)">
<rect x="509.10" y="231.50" width="75.50" height="10.60" fill="url(#hred)"/>
<rect x="509.10" y="231.50" width="75.50" height="10.60" fill="url(#hvr)"/>
</g>
<path d="M513.50 236.60L516.60 233.50L519.70 236.60L516.60 239.70Z" fill="none" stroke="#fff" stroke-width="1.1"/>
<path d="M516.40 236.60L518.00 235.10V238.10Z" fill="#fff"/>
<text x="521.90" y="239.10" font-size="6.3" fill="#ffffff" font-weight="700" textLength="48.10" lengthAdjust="spacingAndGlyphs" filter="url(#ts)">Event On Damage</text>
<rect x="577.80" y="234.40" width="4.40" height="4.40" fill="#d61616" rx="1.1" stroke="#3a0606" stroke-width="1.1"/>
<path d="M574.60 246.40 H576.60 L579.70 249.60 L576.60 252.80 H574.60Z" fill="none" stroke="#e4e4e4" stroke-width="1.05" stroke-linejoin="round"/>
<text x="570.60" y="264.15" font-size="6.6" fill="#f4f4f4" text-anchor="end" textLength="40.60" lengthAdjust="spacingAndGlyphs" filter="url(#ts)" stroke="#f4f4f4" stroke-width="0.28">Damage Amount</text>
<path d="M577.10 259.90 L579.70 261.80 L577.10 263.70Z" fill="#86c936"/>
<circle cx="575.50" cy="261.80" r="2.0" fill="#0a0c0e" stroke="#86c936" stroke-width="1.25"/>
<text x="570.60" y="276.15" font-size="6.6" fill="#f4f4f4" text-anchor="end" textLength="33.53" lengthAdjust="spacingAndGlyphs" filter="url(#ts)" stroke="#f4f4f4" stroke-width="0.28">Damage Tags</text>
<path d="M577.10 271.90 L579.70 273.80 L577.10 275.70Z" fill="#1b529c"/>
<circle cx="575.50" cy="273.80" r="2.0" fill="#0a0c0e" stroke="#1b529c" stroke-width="1.25"/>
<text x="570.60" y="288.15" font-size="6.6" fill="#f4f4f4" text-anchor="end" textLength="42.71" lengthAdjust="spacingAndGlyphs" filter="url(#ts)" stroke="#f4f4f4" stroke-width="0.28">Source Character</text>
<path d="M577.10 283.90 L579.70 285.80 L577.10 287.70Z" fill="#237cc0"/>
<circle cx="575.50" cy="285.80" r="2.0" fill="#0a0c0e" stroke="#237cc0" stroke-width="1.25"/>
<g filter="url(#ns)"><rect x="386.30" y="325.50" width="78.00" height="25.30" rx="3.2" fill="#1e1917" stroke="#060707" stroke-width="1"/></g>
<clipPath id="c16"><rect x="386.80" y="326.00" width="77.00" height="24.30" rx="2.8"/></clipPath>
<g clip-path="url(#c16)">
<rect x="386.30" y="325.50" width="78.00" height="10.60" fill="url(#hred)"/>
<rect x="386.30" y="325.50" width="78.00" height="10.60" fill="url(#hvr)"/>
</g>
<path d="M390.70 330.60L393.80 327.50L396.90 330.60L393.80 333.70Z" fill="none" stroke="#fff" stroke-width="1.1"/>
<path d="M393.60 330.60L395.20 329.10V332.10Z" fill="#fff"/>
<text x="399.10" y="333.10" font-size="6.3" fill="#ffffff" font-weight="700" textLength="50.90" lengthAdjust="spacingAndGlyphs" filter="url(#ts)">Event On Respawn</text>
<rect x="457.50" y="328.40" width="4.40" height="4.40" fill="#d61616" rx="1.1" stroke="#3a0606" stroke-width="1.1"/>
<path d="M454.30 340.40 H456.30 L459.40 343.60 L456.30 346.80 H454.30Z" fill="none" stroke="#e4e4e4" stroke-width="1.05" stroke-linejoin="round"/>
<g filter="url(#ns)"><rect x="509.10" y="325.50" width="68.90" height="25.30" rx="3.2" fill="#1e1917" stroke="#060707" stroke-width="1"/></g>
<clipPath id="c17"><rect x="509.60" y="326.00" width="67.90" height="24.30" rx="2.8"/></clipPath>
<g clip-path="url(#c17)">
<rect x="509.10" y="325.50" width="68.90" height="10.60" fill="url(#hred)"/>
<rect x="509.10" y="325.50" width="68.90" height="10.60" fill="url(#hvr)"/>
</g>
<path d="M513.50 330.60L516.60 327.50L519.70 330.60L516.60 333.70Z" fill="none" stroke="#fff" stroke-width="1.1"/>
<path d="M516.40 330.60L518.00 329.10V332.10Z" fill="#fff"/>
<text x="521.90" y="333.10" font-size="6.3" fill="#ffffff" font-weight="700" textLength="41.85" lengthAdjust="spacingAndGlyphs" filter="url(#ts)">Event On Death</text>
<rect x="571.20" y="328.40" width="4.40" height="4.40" fill="#d61616" rx="1.1" stroke="#3a0606" stroke-width="1.1"/>
<path d="M568.00 340.40 H570.00 L573.10 343.60 L570.00 346.80 H568.00Z" fill="none" stroke="#e4e4e4" stroke-width="1.05" stroke-linejoin="round"/>
<g filter="url(#ns)"><rect x="386.30" y="484.60" width="101.10" height="34.20" rx="3.2" fill="#1b1f20" stroke="#060707" stroke-width="1"/></g>
<clipPath id="c18"><rect x="386.80" y="485.10" width="100.10" height="33.20" rx="2.8"/></clipPath>
<g clip-path="url(#c18)">
<rect x="386.30" y="484.60" width="101.10" height="18.10" fill="url(#hgreen)"/>
<rect x="386.30" y="484.60" width="101.10" height="18.10" fill="url(#hv)"/>
</g>
<path d="M391.30 494.50c1.0 0.4 1.5 -0.3 1.75 -1.5l0.7 -3.6c0.25 -1.3 0.8 -1.9 1.9 -1.6M392.70 490.30h2.3" fill="none" stroke="#bfe8a8" stroke-width="0.95" stroke-linecap="round"/>
<text x="398.80" y="492.20" font-size="6.3" fill="#ffffff" font-weight="700" textLength="19.47" lengthAdjust="spacingAndGlyphs" filter="url(#ts)">Is Alive</text>
<text x="399.00" y="500.00" font-size="5.8" fill="#9fce8c" font-style="italic" textLength="68.99" lengthAdjust="spacingAndGlyphs" opacity="0.9">Target is GSCCharacter Base</text>
<path d="M399.00 501.10h68.99" stroke="#9fce8c" stroke-width="0.45" opacity="0.6"/>
<path d="M394.80 509.50 L397.40 511.40 L394.80 513.30Z" fill="#237cc0"/>
<circle cx="393.20" cy="511.40" r="2.0" fill="#0a0c0e" stroke="#237cc0" stroke-width="1.25"/>
<text x="400.10" y="513.75" font-size="6.6" fill="#f4f4f4" textLength="15.15" lengthAdjust="spacingAndGlyphs" filter="url(#ts)" stroke="#f4f4f4" stroke-width="0.28">Target</text>
<rect x="418.20" y="507.60" width="13.30" height="7.80" fill="none" rx="1" stroke="#b8b8b8" stroke-width="0.7"/>
<text x="424.85" y="513.60" font-size="6.2" fill="#ececec" text-anchor="middle" textLength="8.71" lengthAdjust="spacingAndGlyphs" stroke="#ececec" stroke-width="0.32">self</text>
<text x="473.20" y="512.55" font-size="6.6" fill="#f4f4f4" text-anchor="end" textLength="31.41" lengthAdjust="spacingAndGlyphs" filter="url(#ts)" stroke="#f4f4f4" stroke-width="0.28">Return Value</text>
<path d="M479.90 508.30 L482.50 510.20 L479.90 512.10Z" fill="#5f0c10"/>
<circle cx="478.30" cy="510.20" r="2.0" fill="#0a0c0e" stroke="#5f0c10" stroke-width="1.25"/>
<g filter="url(#ns)"><rect x="509.10" y="484.60" width="97.50" height="46.70" rx="3.2" fill="#1b1f20" stroke="#060707" stroke-width="1"/></g>
<clipPath id="c19"><rect x="509.60" y="485.10" width="96.50" height="45.70" rx="2.8"/></clipPath>
<g clip-path="url(#c19)">
<rect x="509.10" y="484.60" width="97.50" height="18.10" fill="url(#hblue)"/>
<rect x="509.10" y="484.60" width="97.50" height="18.10" fill="url(#hv)"/>
</g>
<path d="M514.10 494.50c1.0 0.4 1.5 -0.3 1.75 -1.5l0.7 -3.6c0.25 -1.3 0.8 -1.9 1.9 -1.6M515.50 490.30h2.3" fill="none" stroke="#9fd0f5" stroke-width="0.95" stroke-linecap="round"/>
<text x="521.60" y="492.20" font-size="6.3" fill="#ffffff" font-weight="700" textLength="8.75" lengthAdjust="spacingAndGlyphs" filter="url(#ts)">Die</text>
<text x="521.80" y="500.00" font-size="5.8" fill="#7fb0d2" font-style="italic" textLength="68.99" lengthAdjust="spacingAndGlyphs" opacity="0.9">Target is GSCCharacter Base</text>
<path d="M521.80 501.10h68.99" stroke="#7fb0d2" stroke-width="0.45" opacity="0.6"/>
<path d="M514.30 507.40 H516.30 L519.40 510.60 L516.30 513.80 H514.30Z" fill="none" stroke="#e4e4e4" stroke-width="1.05" stroke-linejoin="round"/>
<path d="M596.40 507.40 H598.40 L601.50 510.60 L598.40 513.80 H596.40Z" fill="none" stroke="#e4e4e4" stroke-width="1.05" stroke-linejoin="round"/>
<path d="M517.60 521.90 L520.20 523.80 L517.60 525.70Z" fill="#237cc0"/>
<circle cx="516.00" cy="523.80" r="2.0" fill="#0a0c0e" stroke="#237cc0" stroke-width="1.25"/>
<text x="522.90" y="526.15" font-size="6.6" fill="#f4f4f4" textLength="15.15" lengthAdjust="spacingAndGlyphs" filter="url(#ts)" stroke="#f4f4f4" stroke-width="0.28">Target</text>
<rect x="541.00" y="520.00" width="13.30" height="7.80" fill="none" rx="1" stroke="#b8b8b8" stroke-width="0.7"/>
<text x="547.65" y="526.00" font-size="6.2" fill="#ececec" text-anchor="middle" textLength="8.71" lengthAdjust="spacingAndGlyphs" stroke="#ececec" stroke-width="0.32">self</text>
<g filter="url(#ns)"><rect x="25.50" y="492.70" width="101.10" height="33.80" rx="3.2" fill="#1b1f20" stroke="#060707" stroke-width="1"/></g>
<clipPath id="c20"><rect x="26.00" y="493.20" width="100.10" height="32.80" rx="2.8"/></clipPath>
<g clip-path="url(#c20)">
<rect x="25.50" y="492.70" width="101.10" height="18.10" fill="url(#hgreen)"/>
<rect x="25.50" y="492.70" width="101.10" height="18.10" fill="url(#hv)"/>
</g>
<path d="M30.50 502.60c1.0 0.4 1.5 -0.3 1.75 -1.5l0.7 -3.6c0.25 -1.3 0.8 -1.9 1.9 -1.6M31.90 498.40h2.3" fill="none" stroke="#bfe8a8" stroke-width="0.95" stroke-linecap="round"/>
<text x="38.00" y="500.30" font-size="6.3" fill="#ffffff" font-weight="700" textLength="28.11" lengthAdjust="spacingAndGlyphs" filter="url(#ts)">Get Health</text>
<text x="38.20" y="508.10" font-size="5.8" fill="#9fce8c" font-style="italic" textLength="68.99" lengthAdjust="spacingAndGlyphs" opacity="0.9">Target is GSCCharacter Base</text>
<path d="M38.20 509.20h68.99" stroke="#9fce8c" stroke-width="0.45" opacity="0.6"/>
<path d="M34.00 516.90 L36.60 518.80 L34.00 520.70Z" fill="#237cc0"/>
<circle cx="32.40" cy="518.80" r="2.0" fill="#0a0c0e" stroke="#237cc0" stroke-width="1.25"/>
<text x="39.10" y="521.15" font-size="6.6" fill="#f4f4f4" textLength="15.15" lengthAdjust="spacingAndGlyphs" filter="url(#ts)" stroke="#f4f4f4" stroke-width="0.28">Target</text>
<rect x="57.10" y="515.00" width="13.30" height="7.80" fill="none" rx="1" stroke="#b8b8b8" stroke-width="0.7"/>
<text x="63.75" y="521.00" font-size="6.2" fill="#ececec" text-anchor="middle" textLength="8.71" lengthAdjust="spacingAndGlyphs" stroke="#ececec" stroke-width="0.32">self</text>
<text x="112.40" y="520.05" font-size="6.6" fill="#f4f4f4" text-anchor="end" textLength="31.41" lengthAdjust="spacingAndGlyphs" filter="url(#ts)" stroke="#f4f4f4" stroke-width="0.28">Return Value</text>
<path d="M118.90 515.80 L121.50 517.70 L118.90 519.60Z" fill="#86c936"/>
<circle cx="117.30" cy="517.70" r="2.0" fill="#0a0c0e" stroke="#86c936" stroke-width="1.25"/>
<g filter="url(#ns)"><rect x="25.50" y="550.70" width="101.10" height="33.80" rx="3.2" fill="#1b1f20" stroke="#060707" stroke-width="1"/></g>
<clipPath id="c21"><rect x="26.00" y="551.20" width="100.10" height="32.80" rx="2.8"/></clipPath>
<g clip-path="url(#c21)">
<rect x="25.50" y="550.70" width="101.10" height="18.10" fill="url(#hgreen)"/>
<rect x="25.50" y="550.70" width="101.10" height="18.10" fill="url(#hv)"/>
</g>
<path d="M30.50 560.60c1.0 0.4 1.5 -0.3 1.75 -1.5l0.7 -3.6c0.25 -1.3 0.8 -1.9 1.9 -1.6M31.90 556.40h2.3" fill="none" stroke="#bfe8a8" stroke-width="0.95" stroke-linecap="round"/>
<text x="38.00" y="558.30" font-size="6.3" fill="#ffffff" font-weight="700" textLength="25.30" lengthAdjust="spacingAndGlyphs" filter="url(#ts)">Get Mana</text>
<text x="38.20" y="566.10" font-size="5.8" fill="#9fce8c" font-style="italic" textLength="68.99" lengthAdjust="spacingAndGlyphs" opacity="0.9">Target is GSCCharacter Base</text>
<path d="M38.20 567.20h68.99" stroke="#9fce8c" stroke-width="0.45" opacity="0.6"/>
<path d="M34.00 574.90 L36.60 576.80 L34.00 578.70Z" fill="#237cc0"/>
<circle cx="32.40" cy="576.80" r="2.0" fill="#0a0c0e" stroke="#237cc0" stroke-width="1.25"/>
<text x="39.10" y="579.15" font-size="6.6" fill="#f4f4f4" textLength="15.15" lengthAdjust="spacingAndGlyphs" filter="url(#ts)" stroke="#f4f4f4" stroke-width="0.28">Target</text>
<rect x="57.10" y="573.00" width="13.30" height="7.80" fill="none" rx="1" stroke="#b8b8b8" stroke-width="0.7"/>
<text x="63.75" y="579.00" font-size="6.2" fill="#ececec" text-anchor="middle" textLength="8.71" lengthAdjust="spacingAndGlyphs" stroke="#ececec" stroke-width="0.32">self</text>
<text x="112.40" y="578.05" font-size="6.6" fill="#f4f4f4" text-anchor="end" textLength="31.41" lengthAdjust="spacingAndGlyphs" filter="url(#ts)" stroke="#f4f4f4" stroke-width="0.28">Return Value</text>
<path d="M118.90 573.80 L121.50 575.70 L118.90 577.60Z" fill="#86c936"/>
<circle cx="117.30" cy="575.70" r="2.0" fill="#0a0c0e" stroke="#86c936" stroke-width="1.25"/>
<g filter="url(#ns)"><rect x="25.50" y="615.80" width="101.10" height="33.80" rx="3.2" fill="#1b1f20" stroke="#060707" stroke-width="1"/></g>
<clipPath id="c22"><rect x="26.00" y="616.30" width="100.10" height="32.80" rx="2.8"/></clipPath>
<g clip-path="url(#c22)">
<rect x="25.50" y="615.80" width="101.10" height="18.10" fill="url(#hgreen)"/>
<rect x="25.50" y="615.80" width="101.10" height="18.10" fill="url(#hv)"/>
</g>
<path d="M30.50 625.70c1.0 0.4 1.5 -0.3 1.75 -1.5l0.7 -3.6c0.25 -1.3 0.8 -1.9 1.9 -1.6M31.90 621.50h2.3" fill="none" stroke="#bfe8a8" stroke-width="0.95" stroke-linecap="round"/>
<text x="38.00" y="623.40" font-size="6.3" fill="#ffffff" font-weight="700" textLength="32.79" lengthAdjust="spacingAndGlyphs" filter="url(#ts)">Get Stamina</text>
<text x="38.20" y="631.20" font-size="5.8" fill="#9fce8c" font-style="italic" textLength="68.99" lengthAdjust="spacingAndGlyphs" opacity="0.9">Target is GSCCharacter Base</text>
<path d="M38.20 632.30h68.99" stroke="#9fce8c" stroke-width="0.45" opacity="0.6"/>
<path d="M34.00 640.00 L36.60 641.90 L34.00 643.80Z" fill="#237cc0"/>
<circle cx="32.40" cy="641.90" r="2.0" fill="#0a0c0e" stroke="#237cc0" stroke-width="1.25"/>
<text x="39.10" y="644.25" font-size="6.6" fill="#f4f4f4" textLength="15.15" lengthAdjust="spacingAndGlyphs" filter="url(#ts)" stroke="#f4f4f4" stroke-width="0.28">Target</text>
<rect x="57.10" y="638.10" width="13.30" height="7.80" fill="none" rx="1" stroke="#b8b8b8" stroke-width="0.7"/>
<text x="63.75" y="644.10" font-size="6.2" fill="#ececec" text-anchor="middle" textLength="8.71" lengthAdjust="spacingAndGlyphs" stroke="#ececec" stroke-width="0.32">self</text>
<text x="112.40" y="643.15" font-size="6.6" fill="#f4f4f4" text-anchor="end" textLength="31.41" lengthAdjust="spacingAndGlyphs" filter="url(#ts)" stroke="#f4f4f4" stroke-width="0.28">Return Value</text>
<path d="M118.90 638.90 L121.50 640.80 L118.90 642.70Z" fill="#86c936"/>
<circle cx="117.30" cy="640.80" r="2.0" fill="#0a0c0e" stroke="#86c936" stroke-width="1.25"/>
<g filter="url(#ns)"><rect x="176.50" y="492.70" width="100.60" height="33.80" rx="3.2" fill="#1b1f20" stroke="#060707" stroke-width="1"/></g>
<clipPath id="c23"><rect x="177.00" y="493.20" width="99.60" height="32.80" rx="2.8"/></clipPath>
<g clip-path="url(#c23)">
<rect x="176.50" y="492.70" width="100.60" height="18.10" fill="url(#hgreen)"/>
<rect x="176.50" y="492.70" width="100.60" height="18.10" fill="url(#hv)"/>
</g>
<path d="M181.50 502.60c1.0 0.4 1.5 -0.3 1.75 -1.5l0.7 -3.6c0.25 -1.3 0.8 -1.9 1.9 -1.6M182.90 498.40h2.3" fill="none" stroke="#bfe8a8" stroke-width="0.95" stroke-linecap="round"/>
<text x="189.00" y="500.30" font-size="6.3" fill="#ffffff" font-weight="700" textLength="40.60" lengthAdjust="spacingAndGlyphs" filter="url(#ts)">Get Max Health</text>
<text x="189.20" y="508.10" font-size="5.8" fill="#9fce8c" font-style="italic" textLength="68.99" lengthAdjust="spacingAndGlyphs" opacity="0.9">Target is GSCCharacter Base</text>
<path d="M189.20 509.20h68.99" stroke="#9fce8c" stroke-width="0.45" opacity="0.6"/>
<path d="M185.00 516.90 L187.60 518.80 L185.00 520.70Z" fill="#237cc0"/>
<circle cx="183.40" cy="518.80" r="2.0" fill="#0a0c0e" stroke="#237cc0" stroke-width="1.25"/>
<text x="190.10" y="521.15" font-size="6.6" fill="#f4f4f4" textLength="15.15" lengthAdjust="spacingAndGlyphs" filter="url(#ts)" stroke="#f4f4f4" stroke-width="0.28">Target</text>
<rect x="208.10" y="515.00" width="13.30" height="7.80" fill="none" rx="1" stroke="#b8b8b8" stroke-width="0.7"/>
<text x="214.75" y="521.00" font-size="6.2" fill="#ececec" text-anchor="middle" textLength="8.71" lengthAdjust="spacingAndGlyphs" stroke="#ececec" stroke-width="0.32">self</text>
<text x="262.90" y="520.05" font-size="6.6" fill="#f4f4f4" text-anchor="end" textLength="31.41" lengthAdjust="spacingAndGlyphs" filter="url(#ts)" stroke="#f4f4f4" stroke-width="0.28">Return Value</text>
<path d="M269.40 515.80 L272.00 517.70 L269.40 519.60Z" fill="#86c936"/>
<circle cx="267.80" cy="517.70" r="2.0" fill="#0a0c0e" stroke="#86c936" stroke-width="1.25"/>
<g filter="url(#ns)"><rect x="176.50" y="550.70" width="100.60" height="33.80" rx="3.2" fill="#1b1f20" stroke="#060707" stroke-width="1"/></g>
<clipPath id="c24"><rect x="177.00" y="551.20" width="99.60" height="32.80" rx="2.8"/></clipPath>
<g clip-path="url(#c24)">
<rect x="176.50" y="550.70" width="100.60" height="18.10" fill="url(#hgreen)"/>
<rect x="176.50" y="550.70" width="100.60" height="18.10" fill="url(#hv)"/>
</g>
<path d="M181.50 560.60c1.0 0.4 1.5 -0.3 1.75 -1.5l0.7 -3.6c0.25 -1.3 0.8 -1.9 1.9 -1.6M182.90 556.40h2.3" fill="none" stroke="#bfe8a8" stroke-width="0.95" stroke-linecap="round"/>
<text x="189.00" y="558.30" font-size="6.3" fill="#ffffff" font-weight="700" textLength="37.79" lengthAdjust="spacingAndGlyphs" filter="url(#ts)">Get Max Mana</text>
<text x="189.20" y="566.10" font-size="5.8" fill="#9fce8c" font-style="italic" textLength="68.99" lengthAdjust="spacingAndGlyphs" opacity="0.9">Target is GSCCharacter Base</text>
<path d="M189.20 567.20h68.99" stroke="#9fce8c" stroke-width="0.45" opacity="0.6"/>
<path d="M185.00 574.90 L187.60 576.80 L185.00 578.70Z" fill="#237cc0"/>
<circle cx="183.40" cy="576.80" r="2.0" fill="#0a0c0e" stroke="#237cc0" stroke-width="1.25"/>
<text x="190.10" y="579.15" font-size="6.6" fill="#f4f4f4" textLength="15.15" lengthAdjust="spacingAndGlyphs" filter="url(#ts)" stroke="#f4f4f4" stroke-width="0.28">Target</text>
<rect x="208.10" y="573.00" width="13.30" height="7.80" fill="none" rx="1" stroke="#b8b8b8" stroke-width="0.7"/>
<text x="214.75" y="579.00" font-size="6.2" fill="#ececec" text-anchor="middle" textLength="8.71" lengthAdjust="spacingAndGlyphs" stroke="#ececec" stroke-width="0.32">self</text>
<text x="262.90" y="578.05" font-size="6.6" fill="#f4f4f4" text-anchor="end" textLength="31.41" lengthAdjust="spacingAndGlyphs" filter="url(#ts)" stroke="#f4f4f4" stroke-width="0.28">Return Value</text>
<path d="M269.40 573.80 L272.00 575.70 L269.40 577.60Z" fill="#86c936"/>
<circle cx="267.80" cy="575.70" r="2.0" fill="#0a0c0e" stroke="#86c936" stroke-width="1.25"/>
<g filter="url(#ns)"><rect x="176.50" y="615.80" width="100.60" height="33.80" rx="3.2" fill="#1b1f20" stroke="#060707" stroke-width="1"/></g>
<clipPath id="c25"><rect x="177.00" y="616.30" width="99.60" height="32.80" rx="2.8"/></clipPath>
<g clip-path="url(#c25)">
<rect x="176.50" y="615.80" width="100.60" height="18.10" fill="url(#hgreen)"/>
<rect x="176.50" y="615.80" width="100.60" height="18.10" fill="url(#hv)"/>
</g>
<path d="M181.50 625.70c1.0 0.4 1.5 -0.3 1.75 -1.5l0.7 -3.6c0.25 -1.3 0.8 -1.9 1.9 -1.6M182.90 621.50h2.3" fill="none" stroke="#bfe8a8" stroke-width="0.95" stroke-linecap="round"/>
<text x="189.00" y="623.40" font-size="6.3" fill="#ffffff" font-weight="700" textLength="45.29" lengthAdjust="spacingAndGlyphs" filter="url(#ts)">Get Max Stamina</text>
<text x="189.20" y="631.20" font-size="5.8" fill="#9fce8c" font-style="italic" textLength="68.99" lengthAdjust="spacingAndGlyphs" opacity="0.9">Target is GSCCharacter Base</text>
<path d="M189.20 632.30h68.99" stroke="#9fce8c" stroke-width="0.45" opacity="0.6"/>
<path d="M185.00 640.00 L187.60 641.90 L185.00 643.80Z" fill="#237cc0"/>
<circle cx="183.40" cy="641.90" r="2.0" fill="#0a0c0e" stroke="#237cc0" stroke-width="1.25"/>
<text x="190.10" y="644.25" font-size="6.6" fill="#f4f4f4" textLength="15.15" lengthAdjust="spacingAndGlyphs" filter="url(#ts)" stroke="#f4f4f4" stroke-width="0.28">Target</text>
<rect x="208.10" y="638.10" width="13.30" height="7.80" fill="none" rx="1" stroke="#b8b8b8" stroke-width="0.7"/>
<text x="214.75" y="644.10" font-size="6.2" fill="#ececec" text-anchor="middle" textLength="8.71" lengthAdjust="spacingAndGlyphs" stroke="#ececec" stroke-width="0.32">self</text>
<text x="262.90" y="643.15" font-size="6.6" fill="#f4f4f4" text-anchor="end" textLength="31.41" lengthAdjust="spacingAndGlyphs" filter="url(#ts)" stroke="#f4f4f4" stroke-width="0.28">Return Value</text>
<path d="M269.40 638.90 L272.00 640.80 L269.40 642.70Z" fill="#86c936"/>
<circle cx="267.80" cy="640.80" r="2.0" fill="#0a0c0e" stroke="#86c936" stroke-width="1.25"/>
<clipPath id="s5"><path clip-rule="evenodd" d="M0 0H1280V720H0Z M751.80 33.80V673.60H1272.80V33.80Z"/></clipPath>
<g clip-path="url(#s5)"><rect x="751.30" y="33.80" width="522.00" height="641.30" rx="4" fill="#000" opacity="0.75" filter="url(#sb)"/></g>
<rect x="753.3" y="35.3" width="518" height="636.8" rx="3" fill="#868a8c" fill-opacity="0.15" stroke="#d99c2e" stroke-width="3.4"/>
<rect x="751.6" y="33.6" width="521.4" height="640.2" rx="4.5" fill="none" stroke="#2a1c05" stroke-width="0.7" opacity="0.8"/>
<rect x="755" y="37" width="514.6" height="633.4" rx="2" fill="none" stroke="#2a1c05" stroke-width="0.7" opacity="0.6"/>
<path d="M1269.5 662V669.5H1262Z" fill="#fff" opacity="0.3"/>
<text x="759.20" y="49.20" font-size="10.8" fill="#fff" font-weight="700" textLength="147.50" lengthAdjust="spacingAndGlyphs" filter="url(#ts)">Comprehensive Documentation</text>
<g filter="url(#bs)"><rect x="753.50" y="10.50" width="142.50" height="19.00" rx="2.6" fill="url(#bub)" stroke="#f2f2f2" stroke-width="0.9"/>
<path d="M758.70 29.20L760.90 32.30L763.30 29.20Z" fill="#dcdcdc"/></g>
<text x="759.60" y="23.90" font-size="9.9" fill="#646464" textLength="130.00" lengthAdjust="spacingAndGlyphs">Comprehensive Documentation</text>
<rect x="794.90" y="67.40" width="426.10" height="544.60" fill="#151618"/>
<text x="860.20" y="82.00" font-size="6.4" fill="#f4f4f4" font-weight="700" textLength="42.80" lengthAdjust="spacingAndGlyphs" stroke="#f4f4f4" stroke-width="0.25">GAS Companion</text>
<text x="860.20" y="89.30" font-size="4.7" fill="#f4f4f4" font-weight="700" textLength="30.90" lengthAdjust="spacingAndGlyphs" stroke="#f4f4f4" stroke-width="0.2">Documentation</text>
<text x="860.20" y="101.80" font-size="3.9" fill="#a6a8ab" textLength="18.55" lengthAdjust="spacingAndGlyphs">Introduction</text>
<text x="860.20" y="113.80" font-size="3.6" fill="#f4f4f4" font-weight="700" textLength="11.74" lengthAdjust="spacingAndGlyphs">USAGE</text>
<text x="860.20" y="122.30" font-size="3.9" fill="#a6a8ab" textLength="9.27" lengthAdjust="spacingAndGlyphs">Install</text>
<text x="860.20" y="130.80" font-size="3.9" fill="#a6a8ab" textLength="21.12" lengthAdjust="spacingAndGlyphs">Configuration</text>
<text x="860.20" y="139.00" font-size="3.9" fill="#a6a8ab" textLength="23.28" lengthAdjust="spacingAndGlyphs">Getting started</text>
<text x="860.20" y="150.90" font-size="3.6" fill="#f4f4f4" font-weight="700" textLength="12.23" lengthAdjust="spacingAndGlyphs">TOPICS</text>
<text x="860.20" y="159.70" font-size="3.9" fill="#a6a8ab" textLength="33.94" lengthAdjust="spacingAndGlyphs">Ability Queue System</text>
<text x="860.20" y="167.90" font-size="3.9" fill="#a6a8ab" textLength="28.61" lengthAdjust="spacingAndGlyphs">Ignore Ability Cost</text>
<text x="860.20" y="176.30" font-size="3.9" fill="#a6a8ab" textLength="24.47" lengthAdjust="spacingAndGlyphs">Cheat Manager</text>
<text x="860.20" y="184.70" font-size="3.9" fill="#a6a8ab" textLength="24.40" lengthAdjust="spacingAndGlyphs">Working with AI</text>
<text x="860.20" y="193.10" font-size="3.9" fill="#a6a8ab" textLength="24.79" lengthAdjust="spacingAndGlyphs">Working with UI</text>
<text x="860.20" y="204.60" font-size="3.6" fill="#f4f4f4" font-weight="700" textLength="5.50" lengthAdjust="spacingAndGlyphs">API</text>
<text x="860.20" y="212.90" font-size="3.9" fill="#a6a8ab" textLength="31.37" lengthAdjust="spacingAndGlyphs">GSCCharacterBase</text>
<text x="1108.30" y="81.70" font-size="3.4" fill="#a6a8ab" textLength="17.05" lengthAdjust="spacingAndGlyphs">GrantAbility</text>
<text x="1108.30" y="88.44" font-size="3.4" fill="#a6a8ab" textLength="46.93" lengthAdjust="spacingAndGlyphs">HasAnyMatchingGameplayTags</text>
<text x="1108.30" y="95.19" font-size="3.4" fill="#a6a8ab" textLength="39.60" lengthAdjust="spacingAndGlyphs">HasMatchingGameplayTag</text>
<text x="1108.30" y="101.93" font-size="3.4" fill="#a6a8ab" textLength="33.00" lengthAdjust="spacingAndGlyphs">IsAbilityQueueOpened</text>
<text x="1108.30" y="108.68" font-size="3.4" fill="#a6a8ab" textLength="9.71" lengthAdjust="spacingAndGlyphs">IsAlive</text>
<text x="1108.30" y="115.42" font-size="3.4" fill="#a6a8ab" textLength="52.80" lengthAdjust="spacingAndGlyphs">IsAllAbilitiesAllowedForAbilityQueue</text>
<text x="1108.30" y="122.17" font-size="3.4" fill="#a6a8ab" textLength="26.76" lengthAdjust="spacingAndGlyphs">OnAbilityActivated</text>
<text x="1108.30" y="128.91" font-size="3.4" fill="#a6a8ab" textLength="22.74" lengthAdjust="spacingAndGlyphs">OnAbilityEnded</text>
<text x="1108.30" y="135.66" font-size="3.4" fill="#a6a8ab" textLength="22.18" lengthAdjust="spacingAndGlyphs">OnAbilityFailed</text>
<text x="1108.30" y="142.41" font-size="3.4" fill="#a6a8ab" textLength="28.24" lengthAdjust="spacingAndGlyphs">OnAttributeChange</text>
<text x="1108.30" y="149.15" font-size="3.4" fill="#a6a8ab" textLength="13.20" lengthAdjust="spacingAndGlyphs">OnDeath</text>
<text x="1108.30" y="155.90" font-size="3.4" fill="#a6a8ab" textLength="16.87" lengthAdjust="spacingAndGlyphs">OnDamage</text>
<text x="1108.30" y="162.64" font-size="3.4" fill="#a6a8ab" textLength="25.49" lengthAdjust="spacingAndGlyphs">OnHealthChange</text>
<text x="1108.30" y="169.38" font-size="3.4" fill="#a6a8ab" textLength="24.20" lengthAdjust="spacingAndGlyphs">OnManaChange</text>
<text x="1108.30" y="176.13" font-size="3.4" fill="#a6a8ab" textLength="18.15" lengthAdjust="spacingAndGlyphs">OnRespawn</text>
<text x="1108.30" y="182.87" font-size="3.4" fill="#a6a8ab" textLength="26.77" lengthAdjust="spacingAndGlyphs">OpenAbilityQueue</text>
<text x="1108.30" y="189.62" font-size="3.4" fill="#a6a8ab" textLength="28.05" lengthAdjust="spacingAndGlyphs">OnStaminaChange</text>
<text x="1108.30" y="196.36" font-size="3.4" fill="#a6a8ab" textLength="51.51" lengthAdjust="spacingAndGlyphs">SetAllowAllAbilitiesForAbilityQueue</text>
<text x="1108.30" y="203.11" font-size="3.4" fill="#a6a8ab" textLength="57.20" lengthAdjust="spacingAndGlyphs">UpdateAllowedAbilitiesForAbilityQueue</text>
<text x="927.40" y="84.20" font-size="8.3" fill="#f4f4f4" font-weight="700" textLength="63.50" lengthAdjust="spacingAndGlyphs" stroke="#f4f4f4" stroke-width="0.3">GSCCharacterBase</text>
<text x="927.40" y="98.00" font-size="6.4" fill="#f4f4f4" font-weight="700" textLength="58.30" lengthAdjust="spacingAndGlyphs" stroke="#f4f4f4" stroke-width="0.28">ActivateAbilityByClass</text>
<text x="927.40" y="107.25" font-size="3.8" fill="#a6a8ab" textLength="164.70" lengthAdjust="spacingAndGlyphs">Attempts to activate the ability that is passed in. This will check costs and requirements before doing</text>
<text x="927.40" y="113.55" font-size="3.8" fill="#a6a8ab" textLength="149.88" lengthAdjust="spacingAndGlyphs">so. Returns true if it thinks it activated, but it may return false positives due to failure later in</text>
<text x="927.40" y="119.75" font-size="3.8" fill="#a6a8ab" textLength="16.75" lengthAdjust="spacingAndGlyphs">activation.</text>
<text x="927.40" y="187.80" font-size="4.3" fill="#f4f4f4" font-weight="700" textLength="11.70" lengthAdjust="spacingAndGlyphs">Inputs</text>
<text x="930.50" y="200.20" font-size="3.9" fill="#b4b6b8" textLength="19.61" lengthAdjust="spacingAndGlyphs">Ability Class</text>
<text x="930.50" y="206.60" font-size="3.1" fill="#9d9fa2" font-style="italic" textLength="28.42" lengthAdjust="spacingAndGlyphs">GSCGameplay Ability</text>
<text x="930.50" y="213.20" font-size="3.1" fill="#9d9fa2" font-style="italic" textLength="21.81" lengthAdjust="spacingAndGlyphs">Class Reference</text>
<text x="973.30" y="199.75" font-size="3.8" fill="#a6a8ab" textLength="56.02" lengthAdjust="spacingAndGlyphs">Gameplay Ability Class to activate</text>
<text x="930.50" y="226.70" font-size="3.9" fill="#b4b6b8" textLength="22.21" lengthAdjust="spacingAndGlyphs">Allow Remote</text>
<text x="930.50" y="233.30" font-size="3.9" fill="#b4b6b8" textLength="15.61" lengthAdjust="spacingAndGlyphs">Activation</text>
<text x="930.50" y="239.70" font-size="3.1" fill="#9d9fa2" font-style="italic" textLength="10.83" lengthAdjust="spacingAndGlyphs">Boolean</text>
<text x="973.30" y="226.25" font-size="3.8" fill="#a6a8ab" textLength="112.03" lengthAdjust="spacingAndGlyphs">If true, it will remotely activate local/server abilities, if false it will only</text>
<text x="973.30" y="230.95" font-size="3.8" fill="#a6a8ab" textLength="47.96" lengthAdjust="spacingAndGlyphs">try to locally activate abilities.</text>
<text x="927.40" y="255.50" font-size="4.3" fill="#f4f4f4" font-weight="700" textLength="14.95" lengthAdjust="spacingAndGlyphs">Outputs</text>
<text x="930.50" y="268.30" font-size="3.9" fill="#b4b6b8" textLength="25.21" lengthAdjust="spacingAndGlyphs">Activated Ability</text>
<text x="930.50" y="274.30" font-size="3.1" fill="#9d9fa2" font-style="italic" textLength="28.42" lengthAdjust="spacingAndGlyphs">GSCGameplay Ability</text>
<text x="930.50" y="280.90" font-size="3.1" fill="#9d9fa2" font-style="italic" textLength="22.96" lengthAdjust="spacingAndGlyphs">Object Reference</text>
<text x="971.30" y="267.45" font-size="3.8" fill="#a6a8ab" textLength="85.38" lengthAdjust="spacingAndGlyphs">The Gameplay Ability that was triggered on success</text>
<text x="930.50" y="294.80" font-size="3.9" fill="#b4b6b8" textLength="20.75" lengthAdjust="spacingAndGlyphs">Return Value</text>
<text x="930.50" y="300.80" font-size="3.1" fill="#9d9fa2" font-style="italic" textLength="10.83" lengthAdjust="spacingAndGlyphs">Boolean</text>
<text x="971.30" y="293.95" font-size="3.8" fill="#a6a8ab" textLength="110.80" lengthAdjust="spacingAndGlyphs">bSuccess Returns true if it thinks it activated, but it may return false</text>
<text x="971.30" y="298.65" font-size="3.8" fill="#a6a8ab" textLength="66.99" lengthAdjust="spacingAndGlyphs">positives due to failure later in activation.</text>
<rect x="927.40" y="316.30" width="166.20" height="0.60" fill="#3a3c3f"/>
<text x="927.40" y="328.40" font-size="6.4" fill="#f4f4f4" font-weight="700" textLength="56.90" lengthAdjust="spacingAndGlyphs" stroke="#f4f4f4" stroke-width="0.28">ActivateAbilityByTags</text>
<text x="927.40" y="338.15" font-size="3.7" fill="#a6a8ab" textLength="131.25" lengthAdjust="spacingAndGlyphs">Attempts to activate a **single** gameplay ability that matches the given tag and</text>
<text x="927.40" y="344.35" font-size="3.7" fill="#a6a8ab" textLength="166.94" lengthAdjust="spacingAndGlyphs">DoesAbilitySatisfyTagRequirements(). It differs from GAS ASC TryActivateAbilitiesByTag which tries to</text>
<text x="927.40" y="351.05" font-size="3.7" fill="#a6a8ab" textLength="165.72" lengthAdjust="spacingAndGlyphs">activate *every* ability, whereas this version will pick a random one and attempt to activate it. Returns</text>
<text x="927.40" y="357.25" font-size="3.7" fill="#a6a8ab" textLength="137.76" lengthAdjust="spacingAndGlyphs">true if the ability attempts to activate, and the reference to the Activated Ability if any.</text>
<text x="927.40" y="422.60" font-size="4.3" fill="#f4f4f4" font-weight="700" textLength="11.70" lengthAdjust="spacingAndGlyphs">Inputs</text>
<text x="930.50" y="435.10" font-size="3.9" fill="#b4b6b8" textLength="18.14" lengthAdjust="spacingAndGlyphs">Ability Tags</text>
<text x="930.50" y="441.50" font-size="3.1" fill="#9d9fa2" font-style="italic" textLength="19.08" lengthAdjust="spacingAndGlyphs">Gameplay Tag</text>
<text x="930.50" y="447.80" font-size="3.1" fill="#9d9fa2" font-style="italic" textLength="25.58" lengthAdjust="spacingAndGlyphs">Container Structure</text>
<text x="970.90" y="434.55" font-size="3.8" fill="#a6a8ab" textLength="58.23" lengthAdjust="spacingAndGlyphs">Set of Gameplay Tags to search for</text>
<text x="930.50" y="461.70" font-size="3.9" fill="#b4b6b8" textLength="22.21" lengthAdjust="spacingAndGlyphs">Allow Remote</text>
<text x="930.50" y="468.40" font-size="3.9" fill="#b4b6b8" textLength="15.61" lengthAdjust="spacingAndGlyphs">Activation</text>
<text x="930.50" y="474.40" font-size="3.1" fill="#9d9fa2" font-style="italic" textLength="10.83" lengthAdjust="spacingAndGlyphs">Boolean</text>
<text x="970.90" y="460.85" font-size="3.8" fill="#a6a8ab" textLength="117.20" lengthAdjust="spacingAndGlyphs">If true, it will remotely activate local/server abilities, if false it will only try</text>
<text x="970.90" y="465.65" font-size="3.8" fill="#a6a8ab" textLength="42.79" lengthAdjust="spacingAndGlyphs">to locally activate abilities.</text>
<text x="927.40" y="490.60" font-size="4.3" fill="#f4f4f4" font-weight="700" textLength="14.95" lengthAdjust="spacingAndGlyphs">Outputs</text>
<text x="930.50" y="503.10" font-size="3.9" fill="#b4b6b8" textLength="25.21" lengthAdjust="spacingAndGlyphs">Activated Ability</text>
<text x="930.50" y="509.10" font-size="3.1" fill="#9d9fa2" font-style="italic" textLength="28.42" lengthAdjust="spacingAndGlyphs">GSCGameplay Ability</text>
<text x="930.50" y="515.80" font-size="3.1" fill="#9d9fa2" font-style="italic" textLength="22.96" lengthAdjust="spacingAndGlyphs">Object Reference</text>
<text x="970.90" y="502.15" font-size="3.8" fill="#a6a8ab" textLength="85.38" lengthAdjust="spacingAndGlyphs">The Gameplay Ability that was triggered on success</text>
<text x="930.50" y="529.30" font-size="3.9" fill="#b4b6b8" textLength="20.75" lengthAdjust="spacingAndGlyphs">Return Value</text>
<text x="930.50" y="535.30" font-size="3.1" fill="#9d9fa2" font-style="italic" textLength="10.83" lengthAdjust="spacingAndGlyphs">Boolean</text>
<text x="970.90" y="528.35" font-size="3.8" fill="#a6a8ab" textLength="110.80" lengthAdjust="spacingAndGlyphs">bSuccess Returns true if it thinks it activated, but it may return false</text>
<text x="970.90" y="533.25" font-size="3.8" fill="#a6a8ab" textLength="66.99" lengthAdjust="spacingAndGlyphs">positives due to failure later in activation.</text>
<rect x="927.40" y="550.80" width="166.20" height="0.60" fill="#3a3c3f"/>
<text x="927.40" y="563.00" font-size="6.4" fill="#f4f4f4" font-weight="700" textLength="48.40" lengthAdjust="spacingAndGlyphs" stroke="#f4f4f4" stroke-width="0.28">CloseAbilityQueue</text>
<text x="927.40" y="572.85" font-size="3.8" fill="#a6a8ab" textLength="133.76" lengthAdjust="spacingAndGlyphs">Set the bAbilityQueue to false which prevents the ability queue system to activate</text>
<rect x="975.00" y="128.50" width="71.30" height="44.30" fill="#020303"/>
<rect x="975.60" y="129.30" width="69.90" height="8.40" fill="#103a68" opacity="0.85"/>
<rect x="975.60" y="129.30" width="69.90" height="8.40" fill="url(#hblue)" opacity="0.25"/>
<text x="977.20" y="133.50" font-size="4.2" fill="#9fd0f5" font-style="italic" font-family="Liberation Serif, serif">f</text>
<text x="980.60" y="132.90" font-size="3.15" fill="#e8e8e8" font-weight="700" textLength="33.14" lengthAdjust="spacingAndGlyphs">Activate Ability By Class</text>
<text x="980.80" y="136.50" font-size="2.4" fill="#5f88a6" font-style="italic" textLength="28.49" lengthAdjust="spacingAndGlyphs">Target is GSCCharacter Base</text>
<path d="M977.60 140.50h1.1l1.5 1.5l-1.5 1.5h-1.1z" fill="none" stroke="#ddd" stroke-width="0.5"/>
<path d="M1040.70 140.50h1.1l1.5 1.5l-1.5 1.5h-1.1z" fill="none" stroke="#ddd" stroke-width="0.5"/>
<circle cx="978.60" cy="148.30" r="0.95" fill="none" stroke="#2a8fd6" stroke-width="0.55"/>
<text x="981.60" y="149.30" font-size="3.15" fill="#e8e8e8" font-weight="700" textLength="8.45" lengthAdjust="spacingAndGlyphs">Target</text>
<text x="1039.10" y="149.30" font-size="3.15" fill="#e8e8e8" font-weight="700" text-anchor="end" textLength="22.11" lengthAdjust="spacingAndGlyphs">Activated Ability</text>
<circle cx="1041.70" cy="148.30" r="0.95" fill="none" stroke="#2a8fd6" stroke-width="0.55"/>
<text x="1039.10" y="155.30" font-size="3.15" fill="#e8e8e8" font-weight="700" text-anchor="end" textLength="17.33" lengthAdjust="spacingAndGlyphs">Return Value</text>
<circle cx="1041.70" cy="154.30" r="0.95" fill="none" stroke="#3a0606" stroke-width="0.55"/>
<circle cx="978.60" cy="156.30" r="0.95" fill="none" stroke="#22105a" stroke-width="0.55"/>
<text x="981.60" y="155.30" font-size="3.15" fill="#e8e8e8" font-weight="700" textLength="17.02" lengthAdjust="spacingAndGlyphs">Ability Class</text>
<text x="983.60" y="159.10" font-size="2.3" fill="#777" textLength="13.63" lengthAdjust="spacingAndGlyphs">Select Class ▾</text>
<circle cx="978.60" cy="166.50" r="0.95" fill="none" stroke="#3a0606" stroke-width="0.55"/>
<text x="981.60" y="165.50" font-size="3.15" fill="#e8e8e8" font-weight="700" textLength="33.13" lengthAdjust="spacingAndGlyphs">Allow Remote Activation</text>
<rect x="983.60" y="166.90" width="3.20" height="3.20" fill="#111" stroke="#ddd" stroke-width="0.5"/>
<rect x="975.30" y="366.70" width="71.10" height="41.30" fill="#020303"/>
<rect x="975.90" y="367.50" width="69.70" height="8.40" fill="#103a68" opacity="0.85"/>
<rect x="975.90" y="367.50" width="69.70" height="8.40" fill="url(#hblue)" opacity="0.25"/>
<text x="977.50" y="371.70" font-size="4.2" fill="#9fd0f5" font-style="italic" font-family="Liberation Serif, serif">f</text>
<text x="980.90" y="371.10" font-size="3.15" fill="#e8e8e8" font-weight="700" textLength="31.98" lengthAdjust="spacingAndGlyphs">Activate Ability By Tags</text>
<text x="981.10" y="374.70" font-size="2.4" fill="#5f88a6" font-style="italic" textLength="28.49" lengthAdjust="spacingAndGlyphs">Target is GSCCharacter Base</text>
<path d="M977.90 378.70h1.1l1.5 1.5l-1.5 1.5h-1.1z" fill="none" stroke="#ddd" stroke-width="0.5"/>
<path d="M1040.80 378.70h1.1l1.5 1.5l-1.5 1.5h-1.1z" fill="none" stroke="#ddd" stroke-width="0.5"/>
<circle cx="978.90" cy="385.70" r="0.95" fill="none" stroke="#2a8fd6" stroke-width="0.55"/>
<text x="981.90" y="386.70" font-size="3.15" fill="#e8e8e8" font-weight="700" textLength="8.45" lengthAdjust="spacingAndGlyphs">Target</text>
<text x="1039.20" y="386.70" font-size="3.15" fill="#e8e8e8" font-weight="700" text-anchor="end" textLength="22.11" lengthAdjust="spacingAndGlyphs">Activated Ability</text>
<circle cx="1041.80" cy="385.70" r="0.95" fill="none" stroke="#2a8fd6" stroke-width="0.55"/>
<text x="1039.20" y="392.70" font-size="3.15" fill="#e8e8e8" font-weight="700" text-anchor="end" textLength="17.33" lengthAdjust="spacingAndGlyphs">Return Value</text>
<circle cx="1041.80" cy="391.70" r="0.95" fill="none" stroke="#3a0606" stroke-width="0.55"/>
<circle cx="978.90" cy="392.70" r="0.95" fill="none" stroke="#1d5fb3" stroke-width="0.55"/>
<text x="981.90" y="393.70" font-size="3.15" fill="#e8e8e8" font-weight="700" textLength="15.86" lengthAdjust="spacingAndGlyphs">Ability Tags</text>
<rect x="998.30" y="390.70" width="9.00" height="4.20" fill="#cfcfcf"/>
<text x="999.30" y="393.80" font-size="2.4" fill="#666" textLength="5.94" lengthAdjust="spacingAndGlyphs">Edit ▾</text>
<circle cx="978.90" cy="401.30" r="0.95" fill="none" stroke="#3a0606" stroke-width="0.55"/>
<text x="981.90" y="400.30" font-size="3.15" fill="#e8e8e8" font-weight="700" textLength="33.13" lengthAdjust="spacingAndGlyphs">Allow Remote Activation</text>
<rect x="983.90" y="401.50" width="3.20" height="3.20" fill="#111" stroke="#ddd" stroke-width="0.5"/>
<rect x="985.60" y="582.20" width="50.20" height="23.60" fill="#020303"/>
<rect x="986.20" y="583.00" width="48.80" height="8.40" fill="#103a68" opacity="0.85"/>
<rect x="986.20" y="583.00" width="48.80" height="8.40" fill="url(#hblue)" opacity="0.25"/>
<text x="987.80" y="587.20" font-size="4.2" fill="#9fd0f5" font-style="italic" font-family="Liberation Serif, serif">f</text>
<text x="991.20" y="586.60" font-size="3.15" fill="#e8e8e8" font-weight="700" textLength="26.68" lengthAdjust="spacingAndGlyphs">Close Ability Queue</text>
<text x="991.40" y="590.20" font-size="2.4" fill="#5f88a6" font-style="italic" textLength="28.49" lengthAdjust="spacingAndGlyphs">Target is GSCCharacter Base</text>
<path d="M988.20 594.20h1.1l1.5 1.5l-1.5 1.5h-1.1z" fill="none" stroke="#ddd" stroke-width="0.5"/>
<path d="M1030.20 594.20h1.1l1.5 1.5l-1.5 1.5h-1.1z" fill="none" stroke="#ddd" stroke-width="0.5"/>
<circle cx="989.20" cy="601.80" r="0.95" fill="none" stroke="#2a8fd6" stroke-width="0.55"/>
<text x="992.20" y="602.80" font-size="3.15" fill="#e8e8e8" font-weight="700" textLength="8.45" lengthAdjust="spacingAndGlyphs">Target</text>
<text x="1017.40" y="639.40" font-size="21.3" fill="#fff" font-weight="700" text-anchor="middle" textLength="261.20" lengthAdjust="spacingAndGlyphs" stroke="#fff" stroke-width="0.3">Generated from C++ source</text>
<text x="1017.40" y="655.90" font-size="12.2" fill="#fff" font-weight="700" text-anchor="middle" textLength="219.00" lengthAdjust="spacingAndGlyphs" stroke="#fff" stroke-width="0.2">https://mklabs.github.io/GASCompanion</text>
<text x="9.30" y="708.40" font-size="20.9" fill="#fff" font-weight="700" textLength="411.80" lengthAdjust="spacingAndGlyphs" stroke="#fff" stroke-width="0.3">Blueprint Functions / Events for Characters</text>
<text x="1107.30" y="710.30" font-size="41.5" fill="#5a5a5a" font-weight="700" textLength="170.60" lengthAdjust="spacingAndGlyphs" opacity="0.9">BLUEPRIN</text>
<text x="1281.50" y="710.30" font-size="41.5" fill="#5a5a5a" font-weight="700" opacity="0.9">T</text>
</svg></body></html>
